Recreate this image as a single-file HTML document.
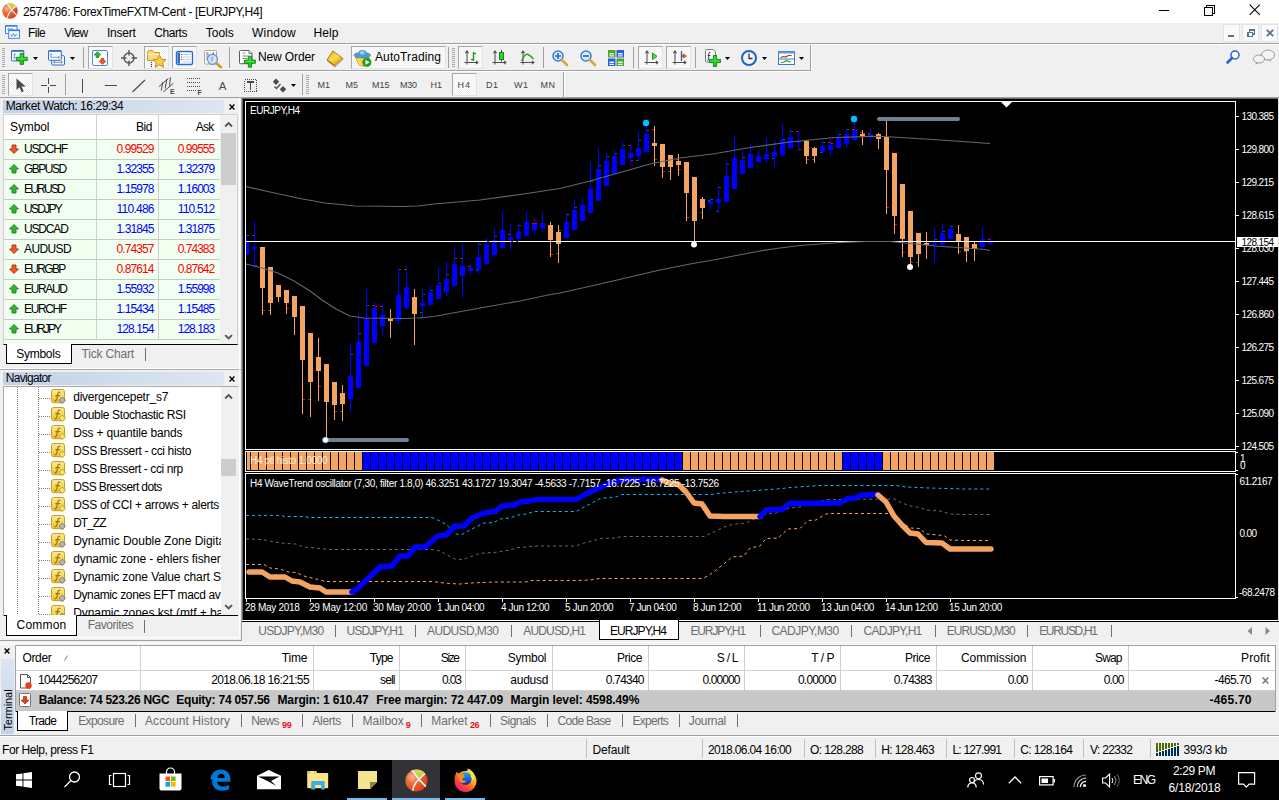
<!DOCTYPE html>
<html><head><meta charset="utf-8"><title>MT4</title>
<style>
*{box-sizing:border-box;margin:0;padding:0}
html,body{width:1279px;height:800px;overflow:hidden;background:#f0f0f0;font-family:"Liberation Sans",sans-serif;font-size:12px;color:#000}
.a{position:absolute}
.t{position:absolute;white-space:nowrap;line-height:14px}
.g{color:#6d6d6d}
.hdr{background:linear-gradient(90deg,#c3d1e5 0%,#dde6f2 100%)}
.red{color:#f00}.blu{color:#00f}
.btn{position:absolute;border:1px solid #e4e4e4;border-top-color:#a8a8a8;border-left-color:#a8a8a8;background:repeating-conic-gradient(#ffffff 0% 25%,#f0f0f0 0% 50%) 0 0/2px 2px}
.sep{position:absolute;width:1px;background:#a0a0a0}
svg{position:absolute;overflow:visible}
</style></head><body>
<!-- title -->
<div class="a" style="left:0px;top:0px;width:1279px;height:23px;background:#fff;"></div>
<svg style="left:2px;top:3px" width="16" height="16" viewBox="0 0 24 24" ><defs><radialGradient id="mt" cx="0.3" cy="0.35" r="0.8"><stop offset="0" stop-color="#ffb89a"/><stop offset="0.35" stop-color="#ee6a3c"/><stop offset="0.8" stop-color="#dc4a1c"/><stop offset="1" stop-color="#b0360e"/></radialGradient>
<linearGradient id="mtg" x1="0" y1="0" x2="0" y2="1"><stop offset="0" stop-color="#e4e070"/><stop offset="1" stop-color="#a8c832"/></linearGradient>
<clipPath id="mtc"><circle cx="12" cy="12" r="11.6"/></clipPath></defs>
<circle cx="12" cy="12" r="11.6" fill="url(#mt)"/>
<g clip-path="url(#mtc)"><path d="M6.500 0L14.500 10.500L22.500 3.500L20 -2H8z" fill="url(#mtg)"/>
<path d="M6.200 0L14.500 10.800L23 19.500M22.500 3L14.500 10.800Q8.200 16.500 8 24" fill="none" stroke="#f4f0ec" stroke-width="1.700"/></g></svg>
<div class="t " style="left:23.00px;top:5px;letter-spacing:-0.364px;">2574786: ForexTimeFXTM-Cent - [EURJPY,H4]</div>
<div class="a" style="left:1159px;top:10px;width:10px;height:1px;background:#000;"></div>
<svg style="left:1203px;top:4px" width="12" height="12" viewBox="0 0 12 12" shape-rendering="crispEdges"><path d="M1.5 3.5h8v8h-8z M3.5 3.500v-2h8v8h-2" fill="none" stroke="#000" stroke-width="1"/></svg>
<svg style="left:1249px;top:4px" width="12" height="12" viewBox="0 0 12 12"><path d="M0.700 0.700L10.800 10.800M10.800 0.700L0.700 10.800" fill="none" stroke="#000" stroke-width="1.100"/></svg>
<!-- menu -->
<svg style="left:4.8px;top:25.3px" width="16" height="14" viewBox="0 0 16 14" ><rect x="0.5" y="0.5" width="11.5" height="8" fill="#fff" stroke="#3c82e8"/><rect x="0.5" y="0.300" width="11.5" height="1.400" fill="#3c82e8"/>
<path d="M2.500 5l1.200-1.800 1.400 2.600 1.400-2.600 1.400 2" fill="none" stroke="#3c82e8" stroke-width="0.900"/>
<rect x="3.700" y="5" width="10.800" height="8.300" fill="#fff" stroke="#3c82e8"/><rect x="3.700" y="4.800" width="10.800" height="1.400" fill="#3c82e8"/>
<path d="M5.500 9.500l1.300 2 1.500-3 1.500 3 1.500-2.500 1.300 1.500" fill="none" stroke="#3c82e8" stroke-width="0.900"/></svg>
<div class="t " style="left:28.00px;top:26px;letter-spacing:-0.531px;">File</div>
<div class="t " style="left:64.25px;top:26px;letter-spacing:-0.599px;">View</div>
<div class="t " style="left:107.00px;top:26px;letter-spacing:-0.250px;">Insert</div>
<div class="t " style="left:154.25px;top:26px;letter-spacing:-0.419px;">Charts</div>
<div class="t " style="left:205.75px;top:26px;letter-spacing:-0.004px;">Tools</div>
<div class="t " style="left:252.00px;top:26px;letter-spacing:0.212px;">Window</div>
<div class="t " style="left:313.50px;top:26px;letter-spacing:0.104px;">Help</div>
<div class="a" style="left:1223px;top:24px;width:17px;height:18px;background:#fafafa;border:1px solid #e2e2e2"></div>
<div class="a" style="left:1242px;top:24px;width:17px;height:18px;background:#fafafa;border:1px solid #e2e2e2"></div>
<div class="a" style="left:1261px;top:24px;width:17px;height:18px;background:#fafafa;border:1px solid #e2e2e2"></div>
<div class="a" style="left:1228px;top:35px;width:6px;height:2px;background:#5b7590;"></div>
<svg style="left:1247px;top:29px" width="8" height="8" viewBox="0 0 8 8" shape-rendering="crispEdges"><path d="M2.500 2.500V0.750h5v4h-1.500" fill="none" stroke="#5b7590" stroke-width="1.500"/><rect x="0.750" y="3.500" width="4.500" height="3.750" fill="none" stroke="#5b7590" stroke-width="1.500"/></svg>
<svg style="left:1266px;top:29px" width="8" height="8" viewBox="0 0 8 8"><path d="M0.800 0.800L7.200 7.200M7.200 0.800L0.800 7.200" fill="none" stroke="#5b7590" stroke-width="1.900"/></svg>
<div class="a" style="left:0px;top:43px;width:1279px;height:1px;background:#a0a0a0;"></div>
<div class="a" style="left:0px;top:44px;width:1279px;height:1px;background:#fff;"></div>
<!-- toolbars -->
<div class="a" style="left:0px;top:70px;width:811px;height:1px;background:#a0a0a0;"></div>
<div class="a" style="left:0px;top:71px;width:812px;height:1px;background:#fff;"></div>
<div class="a" style="left:810px;top:45px;width:1px;height:26px;background:#a0a0a0;"></div>
<div class="a" style="left:811px;top:45px;width:1px;height:27px;background:#fff;"></div>
<div class="a" style="left:0px;top:97px;width:1279px;height:1px;background:#a0a0a0;"></div>
<div class="a" style="left:563px;top:72px;width:1px;height:25px;background:#a0a0a0;"></div>
<div class="a" style="left:564px;top:72px;width:1px;height:25px;background:#fff;"></div>
<div class="a" style="left:2px;top:48px;width:3px;height:20px;background:repeating-linear-gradient(180deg,#a8a8a8 0 1px,transparent 1px 2px)"></div>
<div class="a" style="left:2px;top:75px;width:3px;height:20px;background:repeating-linear-gradient(180deg,#a8a8a8 0 1px,transparent 1px 2px)"></div>
<div class="a" style="left:452px;top:48px;width:3px;height:20px;background:repeating-linear-gradient(180deg,#a8a8a8 0 1px,transparent 1px 2px)"></div>
<div class="a" style="left:306px;top:75px;width:3px;height:20px;background:repeating-linear-gradient(180deg,#a8a8a8 0 1px,transparent 1px 2px)"></div>
<div class="btn" style="left:88px;top:46px;width:25px;height:23px"></div>
<div class="btn" style="left:144px;top:46px;width:25px;height:23px"></div>
<div class="btn" style="left:172px;top:46px;width:25px;height:23px"></div>
<div class="btn" style="left:458px;top:46px;width:25px;height:23px"></div>
<div class="btn" style="left:638px;top:46px;width:25px;height:23px"></div>
<div class="btn" style="left:666px;top:46px;width:25px;height:23px"></div>
<div class="btn" style="left:351px;top:46px;width:95px;height:23px"></div>
<div class="btn" style="left:8px;top:73px;width:25px;height:23px"></div>
<div class="btn" style="left:452px;top:73px;width:25px;height:23px"></div>
<div class="sep" style="left:83px;top:47px;height:21px"></div>
<div class="sep" style="left:229px;top:47px;height:21px"></div>
<div class="sep" style="left:448px;top:47px;height:21px"></div>
<div class="sep" style="left:543px;top:47px;height:21px"></div>
<div class="sep" style="left:633px;top:47px;height:21px"></div>
<div class="sep" style="left:695px;top:47px;height:21px"></div>
<div class="sep" style="left:65px;top:74px;height:21px"></div>
<div class="sep" style="left:302px;top:74px;height:21px"></div>
<svg style="left:11px;top:50px" width="18" height="16" viewBox="0 0 18 16" ><rect x="0.500" y="0.500" width="12.300" height="10.400" rx="1" fill="#f6faff" stroke="#2e6fc0"/><rect x="0.500" y="0.300" width="12.300" height="1.500" fill="#2e6fc0"/><path d="M3.500 3.500v5M2.300 4.700l1.200-1.200 1.200 1.200M2.300 7.300l1.200 1.200 1.200-1.200" stroke="#7a94b8" fill="none" stroke-width="0.900"/><path d="M9.20 3.40h3.2v3.90h3.90v3.2h-3.90v3.90h-3.2v-3.90h-3.90v-3.2h3.90z" fill="#1ec81e" stroke="#0c8a0c" stroke-width="0.900"/><path d="M10.20 4.40h1.2000000000000002v3.90h3.90v1.2000000000000002h-9.00v-1.2000000000000002h3.90z" fill="#5cf05c" opacity="0.750"/></svg>
<svg style="left:33px;top:57px" width="5" height="3" viewBox="0 0 5 3" ><path d="M0 0h5L2.5 3z" fill="#000"/></svg>
<svg style="left:48px;top:50px" width="18" height="16" viewBox="0 0 18 16" ><rect x="3.700" y="5.700" width="12.800" height="9.300" rx="1" fill="#f6faff" stroke="#2e6fc0"/><path d="M5.500 12.300h9M7 11l-1.500 1.300 1.500 1.300M13 11l1.500 1.300-1.500 1.300" stroke="#5a8ac8" fill="none" stroke-width="0.900"/><rect x="0.500" y="0.500" width="12.800" height="9.800" rx="1" fill="#f6faff" stroke="#2e6fc0"/><rect x="0.500" y="0.300" width="12.800" height="1.500" fill="#2e6fc0"/><path d="M3 3.500v4.500M1.900 4.600L3 3.500l1.100 1.100M3 7.300h8.500M10 6l1.500 1.300-1.500 1.300" stroke="#7a94b8" fill="none" stroke-width="0.900"/></svg>
<svg style="left:70px;top:57px" width="5" height="3" viewBox="0 0 5 3" ><path d="M0 0h5L2.5 3z" fill="#000"/></svg>
<svg style="left:92px;top:50px" width="16" height="16" viewBox="0 0 16 16" ><rect x="0.5" y="0.5" width="15" height="15" rx="1.5" fill="#fff" stroke="#4a8ad8"/><path d="M5.5 1.5L9 5H7V7.5H4V5H2z" fill="#2fb62f" stroke="#1a7a1a" stroke-width="0.6"/><path d="M10.5 14.5L14 11H12V8.5H9V11H7z" fill="#f0582a" stroke="#b02c10" stroke-width="0.6"/></svg>
<svg style="left:121px;top:50px" width="16" height="16" viewBox="0 0 16 16" ><circle cx="8" cy="8" r="5" fill="none" stroke="#555" stroke-width="1.4"/><path d="M8 0v5.5M8 10.5V16M0 8h5.5M10.5 8H16" stroke="#555" stroke-width="1.4"/></svg>
<svg style="left:147px;top:49px" width="20" height="19" viewBox="0 0 20 19" ><path d="M0.5 3.5q0-2 2-2h3l2 2h5v8h-12z" fill="#f7dc7a" stroke="#c49a28"/><path d="M0.5 5.5h12" stroke="#fff3b8"/><path d="M4.5 13v5" stroke="#333" stroke-dasharray="1 1"/><path d="M12.5 6l2 4.2 4.5 0.5-3.3 3 1 4.6-4.2-2.4-4.2 2.4 1-4.6-3.3-3 4.5-0.5z" fill="#f6d040" stroke="#b8881c" stroke-width="0.9"/></svg>
<svg style="left:176px;top:51px" width="17" height="14" viewBox="0 0 17 14" ><rect x="0.5" y="0.5" width="16" height="13" rx="1.5" fill="#fff" stroke="#2a6bd0" stroke-width="1.4"/><rect x="1.5" y="1.5" width="2.5" height="11" fill="#2a6bd0"/><path d="M7 3.5h8M7 6h8M7 8.5h8M7 11h8" stroke="#a8c0e8" stroke-width="0.8"/><path d="M5 3.5h1.2M5 6h1.2M5 8.5h1.2" stroke="#e02020" stroke-width="1.2"/></svg>
<svg style="left:204px;top:50px" width="19" height="19" viewBox="0 0 19 19" ><rect x="0.500" y="0.500" width="12" height="13.500" rx="1" fill="#fdfcf8" stroke="#b4a684"/><path d="M3 2v8M9.500 2v6M3 3.500l2 1M9.500 3l-2 1.500" stroke="#6a7a98" stroke-width="0.900" fill="none"/><circle cx="8.500" cy="9.300" r="5" fill="#cfe2f6" fill-opacity="0.880" stroke="#5a92dc" stroke-width="1.200"/><rect x="6.800" y="6.500" width="2.400" height="5" fill="#9ab4d0" opacity="0.800"/><path d="M12.500 13.200l4.300 3.900" stroke="#c89a28" stroke-width="2.600" stroke-linecap="round"/></svg>
<svg style="left:240px;top:50px" width="18" height="19" viewBox="0 0 18 19" ><path d="M1.500 0.500h7.500l3 3v10.200h-11.500q-1 0-1-1v-11.200q0-1 1-1z" fill="#fff" stroke="#5a5a5a"/><path d="M9 0.500v3h3" fill="#e8e8e8" stroke="#5a5a5a" stroke-width="0.800"/><path d="M2.500 3h3M2.500 6h6M2.500 8.500h5" stroke="#888" stroke-width="1.100"/><path d="M8.30 6.20h3.2v3.90h3.90v3.2h-3.90v3.90h-3.2v-3.90h-3.90v-3.2h3.90z" fill="#1ec81e" stroke="#0c8a0c" stroke-width="0.900"/><path d="M9.30 7.20h1.2000000000000002v3.90h3.90v1.2000000000000002h-9.00v-1.2000000000000002h3.90z" fill="#5cf05c" opacity="0.750"/></svg>
<svg style="left:327px;top:50px" width="17" height="17" viewBox="0 0 17 17" ><defs><linearGradient id="bk" x1="0.2" y1="0.1" x2="0.8" y2="0.9"><stop offset="0" stop-color="#e8b428"/><stop offset="0.45" stop-color="#fbe04a"/><stop offset="1" stop-color="#d89818"/></linearGradient></defs><path d="M5.800 0.900L15.800 8.400L7.700 15.600L0.200 9.600z" fill="url(#bk)" stroke="#a8701a" stroke-width="0.900"/><path d="M15.800 8.400l-0.300 1.600-7.600 6.800-0.200-1.200z" fill="#f6e6a8" stroke="#a8701a" stroke-width="0.600"/><path d="M0.200 9.600l0.300 1.500 7.400 5.700-0.200-1.200z" fill="#c88a18" stroke="#a8701a" stroke-width="0.600"/></svg>
<svg style="left:354px;top:49.5px" width="18" height="18" viewBox="0 0 18 18" ><path d="M1.200 7h14l-4.300 8.800q-0.400 0.800-1.300 0.600l-3.400-0.800q-0.800-0.200-1.200-1z" fill="#f6d648" stroke="#c8981c" stroke-width="0.800"/><path d="M3 8.500l3 6.500 1.500 0.300z" fill="#fff2a8" opacity="0.700"/><ellipse cx="8.300" cy="5.200" rx="8.200" ry="2.700" fill="#4e9fd6" stroke="#2e78b8" stroke-width="0.700"/><ellipse cx="8.500" cy="3.200" rx="3.800" ry="2.800" fill="#6cb6e8" stroke="#2e78b8" stroke-width="0.700"/><ellipse cx="8" cy="2.500" rx="2" ry="1.200" fill="#a8d8f8" opacity="0.800"/><circle cx="12.900" cy="12.300" r="4.100" fill="#18a418" stroke="#0c7c0c" stroke-width="0.600"/><path d="M11.500 9.800v5l4.200-2.500z" fill="#fff"/></svg>
<svg style="left:464px;top:50px" width="15" height="16" viewBox="0 0 15 16" ><path d="M3 1v13.500M0.500 12.500H14M1.400 3.200L3 1l1.600 2.200M12 10.900l2 1.600-2 1.600" fill="none" stroke="#505050" stroke-width="1.050"/><path d="M9.5 2v9M7 9.5h2.5M9.5 3.5H12" stroke="#22a022" stroke-width="1.5" fill="none"/></svg>
<svg style="left:492px;top:50px" width="15" height="16" viewBox="0 0 15 16" ><path d="M3 1v13.500M0.500 12.500H14M1.400 3.200L3 1l1.600 2.200M12 10.900l2 1.600-2 1.600" fill="none" stroke="#505050" stroke-width="1.050"/><path d="M9.5 0v11.5" stroke="#333" stroke-width="1"/><rect x="7.5" y="2.5" width="4" height="7" fill="#38d038" stroke="#128a12"/></svg>
<svg style="left:520px;top:50px" width="15" height="16" viewBox="0 0 15 16" ><path d="M3 1v13.500M0.500 12.500H14M1.400 3.200L3 1l1.600 2.200M12 10.900l2 1.600-2 1.600" fill="none" stroke="#505050" stroke-width="1.050"/><path d="M1.5 11Q5 3 8 4.5T13.5 9" fill="none" stroke="#22a022" stroke-width="1.4"/></svg>
<svg style="left:552px;top:50px" width="17" height="17" viewBox="0 0 17 17" ><circle cx="6" cy="6" r="5" fill="#d8ecfc" stroke="#3a84d8" stroke-width="1.6"/><path d="M10 10l5 5" stroke="#d8a838" stroke-width="2.6" stroke-linecap="round"/><path d="M3 6h6M6 3v6" stroke="#2a6bd0" stroke-width="1.7"/></svg>
<svg style="left:580px;top:50px" width="17" height="17" viewBox="0 0 17 17" ><circle cx="6" cy="6" r="5" fill="#d8ecfc" stroke="#3a84d8" stroke-width="1.6"/><path d="M10 10l5 5" stroke="#d8a838" stroke-width="2.6" stroke-linecap="round"/><path d="M3 6h6" stroke="#2a6bd0" stroke-width="1.7"/></svg>
<svg style="left:608px;top:50px" width="16" height="16" viewBox="0 0 16 16" ><rect x="0" y="0" width="7.5" height="7.5" fill="#4aa828"/><rect x="1.5" y="3" width="4.5" height="3.5" fill="#f0f4fa"/><rect x="1.5" y="4.5" width="4.5" height="0.8" fill="#4aa828"/><rect x="8.5" y="0" width="7.5" height="7.5" fill="#2a5ed8"/><rect x="10.0" y="3" width="4.5" height="3.5" fill="#f0f4fa"/><rect x="10.0" y="4.5" width="4.5" height="0.8" fill="#2a5ed8"/><rect x="0" y="8.5" width="7.5" height="7.5" fill="#2a5ed8"/><rect x="1.5" y="11.5" width="4.5" height="3.5" fill="#f0f4fa"/><rect x="1.5" y="13.0" width="4.5" height="0.8" fill="#2a5ed8"/><rect x="8.5" y="8.5" width="7.5" height="7.5" fill="#4aa828"/><rect x="10.0" y="11.5" width="4.5" height="3.5" fill="#f0f4fa"/><rect x="10.0" y="13.0" width="4.5" height="0.8" fill="#4aa828"/></svg>
<svg style="left:644px;top:50px" width="15" height="16" viewBox="0 0 15 16" ><path d="M3 1v13.500M0.500 12.500H14M1.400 3.200L3 1l1.600 2.200M12 10.900l2 1.600-2 1.600" fill="none" stroke="#505050" stroke-width="1.050"/><path d="M8.5 3v6.5l4.5-3.2z" fill="#58d858" stroke="#128a12" stroke-width="0.9"/></svg>
<svg style="left:672px;top:50px" width="15" height="16" viewBox="0 0 15 16" ><path d="M3 1v13.500M0.500 12.500H14M1.400 3.200L3 1l1.600 2.200M12 10.900l2 1.600-2 1.600" fill="none" stroke="#505050" stroke-width="1.050"/><path d="M9.5 1v10" stroke="#2a6bb0" stroke-width="1.4"/><path d="M14.5 6h-4M12.5 4l-2 2 2 2" stroke="#d83a10" stroke-width="1.3" fill="none"/></svg>
<svg style="left:705px;top:49px" width="18" height="19" viewBox="0 0 18 19" ><path d="M0.500 1.500q0-1 1-1h6.500l2.500 2.500v10h-9q-1 0-1-1z" fill="#fff" stroke="#777"/><path d="M5.500 3.500q-1.800-0.300-1.800 1.500v5q0 1.500-1.500 1.200M2.500 6.500h3" fill="none" stroke="#444" stroke-width="1"/><path d="M8.40 6.50h3.2v3.90h3.90v3.2h-3.90v3.90h-3.2v-3.90h-3.90v-3.2h3.90z" fill="#1ec81e" stroke="#0c8a0c" stroke-width="0.900"/><path d="M9.40 7.50h1.2000000000000002v3.90h3.90v1.2000000000000002h-9.00v-1.2000000000000002h3.90z" fill="#5cf05c" opacity="0.750"/></svg>
<svg style="left:725px;top:57px" width="5" height="3" viewBox="0 0 5 3" ><path d="M0 0h5L2.5 3z" fill="#000"/></svg>
<svg style="left:741px;top:50px" width="17" height="17" viewBox="0 0 17 17" ><circle cx="8" cy="8" r="7" fill="#f4f8fc" stroke="#1a62c8" stroke-width="2"/><path d="M8 3.5v5h3.500" fill="none" stroke="#333" stroke-width="1.300"/></svg>
<svg style="left:762px;top:57px" width="5" height="3" viewBox="0 0 5 3" ><path d="M0 0h5L2.5 3z" fill="#000"/></svg>
<svg style="left:778px;top:51px" width="17" height="14" viewBox="0 0 17 14" ><rect x="0.500" y="0.500" width="16" height="13" fill="#fff" stroke="#3a7bd0"/><rect x="0.500" y="0.500" width="16" height="2" fill="#5b9be0"/><path d="M0.500 8h16" stroke="#3a7bd0"/><path d="M2.500 6.500l3-1 2 0.500 3-1.500 3 0" stroke="#c02a10" stroke-width="1.200" fill="none"/><path d="M3 11.500l3-0.500 2.500-1.500 2 1 2.500 0.500" stroke="#22a022" stroke-width="1.200" fill="none"/></svg>
<svg style="left:799px;top:57px" width="5" height="3" viewBox="0 0 5 3" ><path d="M0 0h5L2.5 3z" fill="#000"/></svg>
<svg style="left:1226px;top:50px" width="14" height="15" viewBox="0 0 14 15" ><circle cx="9" cy="5" r="4" fill="#fff" stroke="#2a5ed8" stroke-width="1.500"/><path d="M6 8l-4.500 4.500" stroke="#2a5ed8" stroke-width="2.600" stroke-linecap="round"/></svg>
<svg style="left:1253px;top:49px" width="22" height="17" viewBox="0 0 22 17" ><ellipse cx="15" cy="6" rx="6.500" ry="5" fill="#f4f4f4" stroke="#9a9a9a"/><path d="M17 10.500l1.500 2.500-3-2z" fill="#9a9a9a"/><ellipse cx="6" cy="10" rx="5.500" ry="4" fill="#f4f4f4" stroke="#9a9a9a"/><path d="M3 13.500l-0.500 2.500 2.500-2z" fill="#9a9a9a"/></svg>
<svg style="left:16px;top:78px" width="10" height="15" viewBox="0 0 10 15" ><path d="M0.500 0.500v11.500l3-2.800 2.200 5 2-0.900-2.200-4.800h4.200z" fill="#4a4a4a"/></svg>
<svg style="left:41px;top:78px" width="15" height="15" viewBox="0 0 15 15" shape-rendering="crispEdges"><path d="M7.500 0v6M7.500 9v6M0 7.500h6M9 7.500h6" stroke="#4a4a4a" stroke-width="1.100"/></svg>
<svg style="left:81px;top:79px" width="3" height="14" viewBox="0 0 3 14" shape-rendering="crispEdges"><path d="M1.500 0v14" stroke="#4a4a4a" stroke-width="1.200"/></svg>
<svg style="left:105px;top:84px" width="13" height="3" viewBox="0 0 13 3" shape-rendering="crispEdges"><path d="M0 1.500h12" stroke="#4a4a4a" stroke-width="1.200"/></svg>
<svg style="left:132px;top:79px" width="14" height="14" viewBox="0 0 14 14" ><path d="M0.500 13L13 1" stroke="#4a4a4a" stroke-width="1.200"/></svg>
<svg style="left:159px;top:77px" width="17" height="17" viewBox="0 0 17 17" ><path d="M-0.200 9.700L9.500 1.300M4.400 15L14.400 6.200M3.900 5L2.200 13.600M7.800 2.200L6.200 11.500M11.500 0.300L10.500 8.700" stroke="#4a4a4a" stroke-width="1" fill="none"/><text x="11" y="16.500" font-size="7" font-weight="bold" font-family="Liberation Sans" fill="#4a4a4a">E</text></svg>
<svg style="left:187px;top:78px" width="17" height="17" viewBox="0 0 17 17" shape-rendering="crispEdges"><path d="M0 0.500h13M0 4.500h13M0 8.500h13M0 12.500h9" stroke="#4a4a4a" stroke-width="1" stroke-dasharray="1 1"/><text x="10.500" y="16.500" font-size="7" font-weight="bold" font-family="Liberation Sans" fill="#4a4a4a">F</text></svg>
<div class="t" style="left:218.800px;top:79px;font-size:11.500px;color:#4a4a4a;letter-spacing:0">A</div>
<svg style="left:244px;top:78px" width="14" height="15" viewBox="0 0 14 15" shape-rendering="crispEdges"><rect x="0.500" y="1.500" width="12" height="12" fill="none" stroke="#4a4a4a" stroke-dasharray="1 1"/><path d="M3 4h7M6.500 4v8" stroke="#4a4a4a" stroke-width="1.600"/></svg>
<svg style="left:272px;top:78px" width="15" height="15" viewBox="0 0 15 15" ><path d="M4 0.500l3.200 3.200-3.200 3.200-3.200-3.200z M11 8l3.200 3.200-3.200 3.200-3.200-3.200z" fill="#4a4a4a"/><path d="M2.500 8.500l2 2 4-4.500" stroke="#4a4a4a" stroke-width="1.300" fill="none"/></svg>
<svg style="left:291px;top:84px" width="5" height="3" viewBox="0 0 5 3" ><path d="M0 0h5L2.5 3z" fill="#000"/></svg>
<div class="t " style="left:258.00px;top:50px;letter-spacing:-0.127px;">New Order</div>
<div class="t " style="left:375.00px;top:50px;letter-spacing:0.108px;">AutoTrading</div>
<div class="t " style="left:317.50px;top:78px;letter-spacing:0.000px;font-size:9px;color:#444">M1</div>
<div class="t " style="left:345.60px;top:78px;letter-spacing:-0.100px;font-size:9px;color:#444">M5</div>
<div class="t " style="left:372.00px;top:78px;letter-spacing:0.000px;font-size:9px;color:#444">M15</div>
<div class="t " style="left:400.00px;top:78px;letter-spacing:-0.250px;font-size:9px;color:#444">M30</div>
<div class="t " style="left:430.60px;top:78px;letter-spacing:-0.100px;font-size:9px;color:#444">H1</div>
<div class="t " style="left:457.50px;top:78px;letter-spacing:1.000px;font-size:9px;color:#444">H4</div>
<div class="t " style="left:486.00px;top:78px;letter-spacing:0.500px;font-size:9px;color:#444">D1</div>
<div class="t " style="left:514.00px;top:78px;letter-spacing:0.500px;font-size:9px;color:#444">W1</div>
<div class="t " style="left:540.60px;top:78px;letter-spacing:0.400px;font-size:9px;color:#444">MN</div>
<!-- market_watch -->
<div class="a hdr" style="left:3px;top:100px;width:221px;height:13px"></div>
<div class="t " style="left:5.70px;top:99px;letter-spacing:-0.424px;">Market Watch: 16:29:34</div>
<svg style="left:229px;top:104px" width="6" height="6" viewBox="0 0 6 6" ><path d="M0.600 0.600L5.4 5.4M5.4 0.600L0.600 5.4" stroke="#000" stroke-width="1.450"/></svg>
<div class="a" style="left:3px;top:114px;width:235px;height:231px;background:#fff;border:1px solid #d0d0d0;border-bottom:1px solid #000"></div>
<div class="t " style="left:10.00px;top:120px;letter-spacing:-0.103px;">Symbol</div>
<div class="t " style="left:136.00px;top:120px;letter-spacing:-0.422px;">Bid</div>
<div class="t " style="left:195.70px;top:120px;letter-spacing:-0.750px;">Ask</div>
<div class="a" style="left:96px;top:115px;width:1px;height:229px;background:#d0d0d0;"></div>
<div class="a" style="left:158px;top:115px;width:1px;height:229px;background:#d0d0d0;"></div>
<div class="a" style="left:4px;top:139px;width:216px;height:1px;background:#c8c8c8;"></div>
<div class="a" style="left:4px;top:140px;width:92px;height:19px;background:#f0fff0;"></div>
<div class="a" style="left:97px;top:140px;width:61px;height:19px;background:#f0fff0;"></div>
<div class="a" style="left:159px;top:140px;width:61px;height:19px;background:#f0fff0;"></div>
<div class="a" style="left:4px;top:159px;width:216px;height:1px;background:#c8c8c8;"></div>
<svg style="left:9px;top:144px" width="10" height="10" viewBox="0 0 10 10" ><path d="M5 9.5L9.5 5H7V1H3V5H0.5z" fill="#f0582a" stroke="#b02c10" stroke-width="0.9"/></svg>
<div class="t " style="left:24.00px;top:142px;letter-spacing:-1.163px;">USDCHF</div>
<div class="t red" style="left:116.50px;top:142px;letter-spacing:-0.893px;">0.99529</div>
<div class="t red" style="left:177.70px;top:142px;letter-spacing:-0.977px;">0.99555</div>
<div class="a" style="left:4px;top:160px;width:92px;height:19px;background:#f0fff0;"></div>
<div class="a" style="left:97px;top:160px;width:61px;height:19px;background:#f0fff0;"></div>
<div class="a" style="left:159px;top:160px;width:61px;height:19px;background:#f0fff0;"></div>
<div class="a" style="left:4px;top:179px;width:216px;height:1px;background:#c8c8c8;"></div>
<svg style="left:9px;top:164px" width="10" height="10" viewBox="0 0 10 10" ><path d="M5 0.5L9.5 5H7V9H3V5H0.5z" fill="#35b535" stroke="#1c7a1c" stroke-width="0.9"/></svg>
<div class="t " style="left:24.00px;top:162px;letter-spacing:-1.494px;">GBPUSD</div>
<div class="t blu" style="left:116.50px;top:162px;letter-spacing:-0.893px;">1.32355</div>
<div class="t blu" style="left:177.70px;top:162px;letter-spacing:-0.977px;">1.32379</div>
<div class="a" style="left:4px;top:180px;width:92px;height:19px;background:#f0fff0;"></div>
<div class="a" style="left:97px;top:180px;width:61px;height:19px;background:#f0fff0;"></div>
<div class="a" style="left:159px;top:180px;width:61px;height:19px;background:#f0fff0;"></div>
<div class="a" style="left:4px;top:199px;width:216px;height:1px;background:#c8c8c8;"></div>
<svg style="left:9px;top:184px" width="10" height="10" viewBox="0 0 10 10" ><path d="M5 0.5L9.5 5H7V9H3V5H0.5z" fill="#35b535" stroke="#1c7a1c" stroke-width="0.9"/></svg>
<div class="t " style="left:24.00px;top:182px;letter-spacing:-1.778px;">EURUSD</div>
<div class="t blu" style="left:116.50px;top:182px;letter-spacing:-0.893px;">1.15978</div>
<div class="t blu" style="left:177.70px;top:182px;letter-spacing:-0.977px;">1.16003</div>
<div class="a" style="left:4px;top:200px;width:92px;height:19px;background:#f0fff0;"></div>
<div class="a" style="left:97px;top:200px;width:61px;height:19px;background:#f0fff0;"></div>
<div class="a" style="left:159px;top:200px;width:61px;height:19px;background:#f0fff0;"></div>
<div class="a" style="left:4px;top:219px;width:216px;height:1px;background:#c8c8c8;"></div>
<svg style="left:9px;top:204px" width="10" height="10" viewBox="0 0 10 10" ><path d="M5 0.5L9.5 5H7V9H3V5H0.5z" fill="#35b535" stroke="#1c7a1c" stroke-width="0.9"/></svg>
<div class="t " style="left:24.00px;top:202px;letter-spacing:-1.709px;">USDJPY</div>
<div class="t blu" style="left:116.50px;top:202px;letter-spacing:-0.745px;">110.486</div>
<div class="t blu" style="left:177.70px;top:202px;letter-spacing:-0.828px;">110.512</div>
<div class="a" style="left:4px;top:220px;width:92px;height:19px;background:#f0fff0;"></div>
<div class="a" style="left:97px;top:220px;width:61px;height:19px;background:#f0fff0;"></div>
<div class="a" style="left:159px;top:220px;width:61px;height:19px;background:#f0fff0;"></div>
<div class="a" style="left:4px;top:239px;width:216px;height:1px;background:#c8c8c8;"></div>
<svg style="left:9px;top:224px" width="10" height="10" viewBox="0 0 10 10" ><path d="M5 0.5L9.5 5H7V9H3V5H0.5z" fill="#35b535" stroke="#1c7a1c" stroke-width="0.9"/></svg>
<div class="t " style="left:24.00px;top:222px;letter-spacing:-1.158px;">USDCAD</div>
<div class="t blu" style="left:116.50px;top:222px;letter-spacing:-0.893px;">1.31845</div>
<div class="t blu" style="left:177.70px;top:222px;letter-spacing:-0.977px;">1.31875</div>
<div class="a" style="left:4px;top:240px;width:92px;height:19px;background:#f0fff0;"></div>
<div class="a" style="left:97px;top:240px;width:61px;height:19px;background:#f0fff0;"></div>
<div class="a" style="left:159px;top:240px;width:61px;height:19px;background:#f0fff0;"></div>
<div class="a" style="left:4px;top:259px;width:216px;height:1px;background:#c8c8c8;"></div>
<svg style="left:9px;top:244px" width="10" height="10" viewBox="0 0 10 10" ><path d="M5 9.5L9.5 5H7V1H3V5H0.5z" fill="#f0582a" stroke="#b02c10" stroke-width="0.9"/></svg>
<div class="t " style="left:24.00px;top:242px;letter-spacing:-0.617px;">AUDUSD</div>
<div class="t red" style="left:116.50px;top:242px;letter-spacing:-0.893px;">0.74357</div>
<div class="t red" style="left:177.70px;top:242px;letter-spacing:-0.977px;">0.74383</div>
<div class="a" style="left:4px;top:260px;width:92px;height:19px;background:#f0fff0;"></div>
<div class="a" style="left:97px;top:260px;width:61px;height:19px;background:#f0fff0;"></div>
<div class="a" style="left:159px;top:260px;width:61px;height:19px;background:#f0fff0;"></div>
<div class="a" style="left:4px;top:279px;width:216px;height:1px;background:#c8c8c8;"></div>
<svg style="left:9px;top:264px" width="10" height="10" viewBox="0 0 10 10" ><path d="M5 9.5L9.5 5H7V1H3V5H0.5z" fill="#f0582a" stroke="#b02c10" stroke-width="0.9"/></svg>
<div class="t " style="left:24.00px;top:262px;letter-spacing:-1.694px;">EURGBP</div>
<div class="t red" style="left:116.50px;top:262px;letter-spacing:-0.893px;">0.87614</div>
<div class="t red" style="left:177.70px;top:262px;letter-spacing:-0.977px;">0.87642</div>
<div class="a" style="left:4px;top:280px;width:92px;height:19px;background:#f0fff0;"></div>
<div class="a" style="left:97px;top:280px;width:61px;height:19px;background:#f0fff0;"></div>
<div class="a" style="left:159px;top:280px;width:61px;height:19px;background:#f0fff0;"></div>
<div class="a" style="left:4px;top:299px;width:216px;height:1px;background:#c8c8c8;"></div>
<svg style="left:9px;top:284px" width="10" height="10" viewBox="0 0 10 10" ><path d="M5 0.5L9.5 5H7V9H3V5H0.5z" fill="#35b535" stroke="#1c7a1c" stroke-width="0.9"/></svg>
<div class="t " style="left:24.00px;top:282px;letter-spacing:-1.358px;">EURAUD</div>
<div class="t blu" style="left:116.50px;top:282px;letter-spacing:-0.893px;">1.55932</div>
<div class="t blu" style="left:177.70px;top:282px;letter-spacing:-0.977px;">1.55998</div>
<div class="a" style="left:4px;top:300px;width:92px;height:19px;background:#f0fff0;"></div>
<div class="a" style="left:97px;top:300px;width:61px;height:19px;background:#f0fff0;"></div>
<div class="a" style="left:159px;top:300px;width:61px;height:19px;background:#f0fff0;"></div>
<div class="a" style="left:4px;top:319px;width:216px;height:1px;background:#c8c8c8;"></div>
<svg style="left:9px;top:304px" width="10" height="10" viewBox="0 0 10 10" ><path d="M5 0.5L9.5 5H7V9H3V5H0.5z" fill="#35b535" stroke="#1c7a1c" stroke-width="0.9"/></svg>
<div class="t " style="left:24.00px;top:302px;letter-spacing:-1.363px;">EURCHF</div>
<div class="t blu" style="left:116.50px;top:302px;letter-spacing:-0.893px;">1.15434</div>
<div class="t blu" style="left:177.70px;top:302px;letter-spacing:-0.977px;">1.15485</div>
<div class="a" style="left:4px;top:320px;width:92px;height:19px;background:#f0fff0;"></div>
<div class="a" style="left:97px;top:320px;width:61px;height:19px;background:#f0fff0;"></div>
<div class="a" style="left:159px;top:320px;width:61px;height:19px;background:#f0fff0;"></div>
<div class="a" style="left:4px;top:339px;width:216px;height:1px;background:#c8c8c8;"></div>
<svg style="left:9px;top:324px" width="10" height="10" viewBox="0 0 10 10" ><path d="M5 0.5L9.5 5H7V9H3V5H0.5z" fill="#35b535" stroke="#1c7a1c" stroke-width="0.9"/></svg>
<div class="t " style="left:24.00px;top:322px;letter-spacing:-1.849px;">EURJPY</div>
<div class="t blu" style="left:116.50px;top:322px;letter-spacing:-0.893px;">128.154</div>
<div class="t blu" style="left:177.70px;top:322px;letter-spacing:-0.977px;">128.183</div>
<div class="a" style="left:4px;top:340px;width:216px;height:4px;background:#f0fff0;"></div>
<div class="a" style="left:220px;top:115px;width:17px;height:229px;background:#f0f0f0;"></div>
<div class="a" style="left:221px;top:133px;width:15px;height:52px;background:#cdcdcd;"></div>
<svg style="left:224px;top:120.5px" width="9.2" height="7.6" viewBox="0 0 9.2 7.6" ><path d="M1.2 5.500L4.600 2.100L8 5.500" fill="none" stroke="#555" stroke-width="1.900"/></svg>
<svg style="left:224px;top:332.5px" width="9.2" height="7.6" viewBox="0 0 9.2 7.6" ><path d="M1.2 2.100L4.600 5.500L8 2.100" fill="none" stroke="#555" stroke-width="1.900"/></svg>
<div class="a" style="left:6px;top:344px;width:66px;height:20px;background:#fff;border:1px solid #000;border-top:none"></div>
<div class="a" style="left:7px;top:344px;width:64px;height:1px;background:#fff;"></div>
<div class="t " style="left:16.20px;top:347px;letter-spacing:-0.253px;">Symbols</div>
<div class="t g" style="left:81.60px;top:347px;letter-spacing:-0.182px;">Tick Chart</div>
<div class="a" style="left:145px;top:348px;width:1px;height:13px;background:#707070;"></div>
<!-- navigator -->
<div class="a" style="left:0px;top:368px;width:241px;height:1px;background:#fff;"></div>
<div class="a" style="left:0px;top:369px;width:241px;height:1px;background:#a9a9a9;"></div>
<div class="a hdr" style="left:3px;top:372px;width:221px;height:13px"></div>
<div class="t " style="left:5.80px;top:371px;letter-spacing:-0.707px;">Navigator</div>
<svg style="left:229px;top:376px" width="6" height="6" viewBox="0 0 6 6" ><path d="M0.600 0.600L5.4 5.4M5.4 0.600L0.600 5.4" stroke="#000" stroke-width="1.450"/></svg>
<div class="a" style="left:3px;top:386px;width:235px;height:1px;background:#a9a9a9;"></div>
<div class="a" style="left:3px;top:387px;width:235px;height:229px;background:#fff;border-bottom:1px solid #000;overflow:hidden">
<div class="a" style="left:14px;top:0;width:1px;height:228px;background:repeating-linear-gradient(180deg,#808080 0 1px,transparent 1px 2px)"></div>
<div class="a" style="left:35px;top:0;width:1px;height:228px;background:repeating-linear-gradient(180deg,#808080 0 1px,transparent 1px 2px)"></div>
<div class="a" style="left:36px;top:11px;width:11px;height:1px;background:repeating-linear-gradient(90deg,#808080 0 1px,transparent 1px 2px)"></div>
<svg style="left:48.25px;top:2px" width="15" height="15" viewBox="0 0 15 15" ><defs><linearGradient id="fg0" x1="0" y1="0" x2="0" y2="1"><stop offset="0" stop-color="#fcec9c"/><stop offset="0.5" stop-color="#f6d858"/><stop offset="1" stop-color="#eec02c"/></linearGradient></defs>
<rect x="0.5" y="0.5" width="13" height="13.2" rx="2.2" fill="url(#fg0)" stroke="#c49e24"/>
<path d="M9 3.200Q7.200 2.600 6.800 5L5.800 10.200Q5.400 12 3.800 11.400M4.800 6.600H8.600" fill="none" stroke="#9a7414" stroke-width="1.200" stroke-linecap="round"/>
<path d="M11.250 8l3.300 3.300-3.300 3.300-3.300-3.300z" fill="#b4b4b4" stroke="#6e6e6e" stroke-width="0.800"/></svg>
<div class="t " style="left:70.20px;top:3px;letter-spacing:-0.220px;">divergencepetr_s7</div>
<div class="a" style="left:36px;top:29px;width:11px;height:1px;background:repeating-linear-gradient(90deg,#808080 0 1px,transparent 1px 2px)"></div>
<svg style="left:48.25px;top:20px" width="15" height="15" viewBox="0 0 15 15" ><defs><linearGradient id="fg1" x1="0" y1="0" x2="0" y2="1"><stop offset="0" stop-color="#fcec9c"/><stop offset="0.5" stop-color="#f6d858"/><stop offset="1" stop-color="#eec02c"/></linearGradient></defs>
<rect x="0.5" y="0.5" width="13" height="13.2" rx="2.2" fill="url(#fg1)" stroke="#c49e24"/>
<path d="M9 3.200Q7.200 2.600 6.800 5L5.800 10.200Q5.400 12 3.800 11.400M4.800 6.600H8.600" fill="none" stroke="#9a7414" stroke-width="1.200" stroke-linecap="round"/>
<path d="M11.250 8l3.300 3.300-3.300 3.300-3.300-3.300z" fill="#f8e268" stroke="#b8921c" stroke-width="0.800"/></svg>
<div class="t " style="left:70.20px;top:21px;letter-spacing:-0.362px;">Double Stochastic RSI</div>
<div class="a" style="left:36px;top:47px;width:11px;height:1px;background:repeating-linear-gradient(90deg,#808080 0 1px,transparent 1px 2px)"></div>
<svg style="left:48.25px;top:38px" width="15" height="15" viewBox="0 0 15 15" ><defs><linearGradient id="fg2" x1="0" y1="0" x2="0" y2="1"><stop offset="0" stop-color="#fcec9c"/><stop offset="0.5" stop-color="#f6d858"/><stop offset="1" stop-color="#eec02c"/></linearGradient></defs>
<rect x="0.5" y="0.5" width="13" height="13.2" rx="2.2" fill="url(#fg2)" stroke="#c49e24"/>
<path d="M9 3.200Q7.200 2.600 6.800 5L5.800 10.200Q5.400 12 3.800 11.400M4.800 6.600H8.600" fill="none" stroke="#9a7414" stroke-width="1.200" stroke-linecap="round"/>
<path d="M11.250 8l3.300 3.300-3.300 3.300-3.300-3.300z" fill="#f8e268" stroke="#b8921c" stroke-width="0.800"/></svg>
<div class="t " style="left:70.20px;top:39px;letter-spacing:-0.163px;">Dss + quantile bands</div>
<div class="a" style="left:36px;top:65px;width:11px;height:1px;background:repeating-linear-gradient(90deg,#808080 0 1px,transparent 1px 2px)"></div>
<svg style="left:48.25px;top:56px" width="15" height="15" viewBox="0 0 15 15" ><defs><linearGradient id="fg3" x1="0" y1="0" x2="0" y2="1"><stop offset="0" stop-color="#fcec9c"/><stop offset="0.5" stop-color="#f6d858"/><stop offset="1" stop-color="#eec02c"/></linearGradient></defs>
<rect x="0.5" y="0.5" width="13" height="13.2" rx="2.2" fill="url(#fg3)" stroke="#c49e24"/>
<path d="M9 3.200Q7.200 2.600 6.800 5L5.800 10.200Q5.400 12 3.800 11.400M4.800 6.600H8.600" fill="none" stroke="#9a7414" stroke-width="1.200" stroke-linecap="round"/>
<path d="M11.250 8l3.300 3.300-3.300 3.300-3.300-3.300z" fill="#f8e268" stroke="#b8921c" stroke-width="0.800"/></svg>
<div class="t " style="left:70.20px;top:57px;letter-spacing:-0.364px;">DSS Bressert - cci histo</div>
<div class="a" style="left:36px;top:83px;width:11px;height:1px;background:repeating-linear-gradient(90deg,#808080 0 1px,transparent 1px 2px)"></div>
<svg style="left:48.25px;top:74px" width="15" height="15" viewBox="0 0 15 15" ><defs><linearGradient id="fg4" x1="0" y1="0" x2="0" y2="1"><stop offset="0" stop-color="#fcec9c"/><stop offset="0.5" stop-color="#f6d858"/><stop offset="1" stop-color="#eec02c"/></linearGradient></defs>
<rect x="0.5" y="0.5" width="13" height="13.2" rx="2.2" fill="url(#fg4)" stroke="#c49e24"/>
<path d="M9 3.200Q7.200 2.600 6.800 5L5.800 10.200Q5.400 12 3.800 11.400M4.800 6.600H8.600" fill="none" stroke="#9a7414" stroke-width="1.200" stroke-linecap="round"/>
<path d="M11.250 8l3.300 3.300-3.300 3.300-3.300-3.300z" fill="#f8e268" stroke="#b8921c" stroke-width="0.800"/></svg>
<div class="t " style="left:70.20px;top:75px;letter-spacing:-0.413px;">DSS Bressert - cci nrp</div>
<div class="a" style="left:36px;top:101px;width:11px;height:1px;background:repeating-linear-gradient(90deg,#808080 0 1px,transparent 1px 2px)"></div>
<svg style="left:48.25px;top:92px" width="15" height="15" viewBox="0 0 15 15" ><defs><linearGradient id="fg5" x1="0" y1="0" x2="0" y2="1"><stop offset="0" stop-color="#fcec9c"/><stop offset="0.5" stop-color="#f6d858"/><stop offset="1" stop-color="#eec02c"/></linearGradient></defs>
<rect x="0.5" y="0.5" width="13" height="13.2" rx="2.2" fill="url(#fg5)" stroke="#c49e24"/>
<path d="M9 3.200Q7.200 2.600 6.800 5L5.800 10.200Q5.400 12 3.800 11.400M4.800 6.600H8.600" fill="none" stroke="#9a7414" stroke-width="1.200" stroke-linecap="round"/>
<path d="M11.250 8l3.300 3.300-3.300 3.300-3.300-3.300z" fill="#f8e268" stroke="#b8921c" stroke-width="0.800"/></svg>
<div class="t " style="left:70.20px;top:93px;letter-spacing:-0.604px;">DSS Bressert dots</div>
<div class="a" style="left:36px;top:119px;width:11px;height:1px;background:repeating-linear-gradient(90deg,#808080 0 1px,transparent 1px 2px)"></div>
<svg style="left:48.25px;top:110px" width="15" height="15" viewBox="0 0 15 15" ><defs><linearGradient id="fg6" x1="0" y1="0" x2="0" y2="1"><stop offset="0" stop-color="#fcec9c"/><stop offset="0.5" stop-color="#f6d858"/><stop offset="1" stop-color="#eec02c"/></linearGradient></defs>
<rect x="0.5" y="0.5" width="13" height="13.2" rx="2.2" fill="url(#fg6)" stroke="#c49e24"/>
<path d="M9 3.200Q7.200 2.600 6.800 5L5.800 10.200Q5.400 12 3.800 11.400M4.800 6.600H8.600" fill="none" stroke="#9a7414" stroke-width="1.200" stroke-linecap="round"/>
<path d="M11.250 8l3.300 3.300-3.300 3.300-3.300-3.300z" fill="#f8e268" stroke="#b8921c" stroke-width="0.800"/></svg>
<div class="t " style="left:70.20px;top:111px;letter-spacing:-0.322px;">DSS of CCI + arrows + alerts</div>
<div class="a" style="left:36px;top:137px;width:11px;height:1px;background:repeating-linear-gradient(90deg,#808080 0 1px,transparent 1px 2px)"></div>
<svg style="left:48.25px;top:128px" width="15" height="15" viewBox="0 0 15 15" ><defs><linearGradient id="fg7" x1="0" y1="0" x2="0" y2="1"><stop offset="0" stop-color="#fcec9c"/><stop offset="0.5" stop-color="#f6d858"/><stop offset="1" stop-color="#eec02c"/></linearGradient></defs>
<rect x="0.5" y="0.5" width="13" height="13.2" rx="2.2" fill="url(#fg7)" stroke="#c49e24"/>
<path d="M9 3.200Q7.200 2.600 6.800 5L5.800 10.200Q5.400 12 3.800 11.400M4.800 6.600H8.600" fill="none" stroke="#9a7414" stroke-width="1.200" stroke-linecap="round"/>
<path d="M11.250 8l3.300 3.300-3.300 3.300-3.300-3.300z" fill="#b4b4b4" stroke="#6e6e6e" stroke-width="0.800"/></svg>
<div class="t " style="left:70.20px;top:129px;letter-spacing:-1.007px;">DT_ZZ</div>
<div class="a" style="left:36px;top:155px;width:11px;height:1px;background:repeating-linear-gradient(90deg,#808080 0 1px,transparent 1px 2px)"></div>
<svg style="left:48.25px;top:146px" width="15" height="15" viewBox="0 0 15 15" ><defs><linearGradient id="fg8" x1="0" y1="0" x2="0" y2="1"><stop offset="0" stop-color="#fcec9c"/><stop offset="0.5" stop-color="#f6d858"/><stop offset="1" stop-color="#eec02c"/></linearGradient></defs>
<rect x="0.5" y="0.5" width="13" height="13.2" rx="2.2" fill="url(#fg8)" stroke="#c49e24"/>
<path d="M9 3.200Q7.200 2.600 6.800 5L5.800 10.200Q5.400 12 3.800 11.400M4.800 6.600H8.600" fill="none" stroke="#9a7414" stroke-width="1.200" stroke-linecap="round"/>
<path d="M11.250 8l3.300 3.300-3.300 3.300-3.300-3.300z" fill="#b4b4b4" stroke="#6e6e6e" stroke-width="0.800"/></svg>
<div class="t " style="left:70.20px;top:147px;letter-spacing:-0.029px;">Dynamic Double Zone Digita</div>
<div class="a" style="left:36px;top:173px;width:11px;height:1px;background:repeating-linear-gradient(90deg,#808080 0 1px,transparent 1px 2px)"></div>
<svg style="left:48.25px;top:164px" width="15" height="15" viewBox="0 0 15 15" ><defs><linearGradient id="fg9" x1="0" y1="0" x2="0" y2="1"><stop offset="0" stop-color="#fcec9c"/><stop offset="0.5" stop-color="#f6d858"/><stop offset="1" stop-color="#eec02c"/></linearGradient></defs>
<rect x="0.5" y="0.5" width="13" height="13.2" rx="2.2" fill="url(#fg9)" stroke="#c49e24"/>
<path d="M9 3.200Q7.200 2.600 6.800 5L5.800 10.200Q5.400 12 3.800 11.400M4.800 6.600H8.600" fill="none" stroke="#9a7414" stroke-width="1.200" stroke-linecap="round"/>
<path d="M11.250 8l3.300 3.300-3.300 3.300-3.300-3.300z" fill="#b4b4b4" stroke="#6e6e6e" stroke-width="0.800"/></svg>
<div class="t " style="left:70.20px;top:165px;letter-spacing:-0.094px;">dynamic zone - ehlers fisher</div>
<div class="a" style="left:36px;top:191px;width:11px;height:1px;background:repeating-linear-gradient(90deg,#808080 0 1px,transparent 1px 2px)"></div>
<svg style="left:48.25px;top:182px" width="15" height="15" viewBox="0 0 15 15" ><defs><linearGradient id="fg10" x1="0" y1="0" x2="0" y2="1"><stop offset="0" stop-color="#fcec9c"/><stop offset="0.5" stop-color="#f6d858"/><stop offset="1" stop-color="#eec02c"/></linearGradient></defs>
<rect x="0.5" y="0.5" width="13" height="13.2" rx="2.2" fill="url(#fg10)" stroke="#c49e24"/>
<path d="M9 3.200Q7.200 2.600 6.800 5L5.800 10.200Q5.400 12 3.800 11.400M4.800 6.600H8.600" fill="none" stroke="#9a7414" stroke-width="1.200" stroke-linecap="round"/>
<path d="M11.250 8l3.300 3.300-3.300 3.300-3.300-3.300z" fill="#b4b4b4" stroke="#6e6e6e" stroke-width="0.800"/></svg>
<div class="t " style="left:70.20px;top:183px;letter-spacing:-0.108px;">Dynamic zone Value chart St</div>
<div class="a" style="left:36px;top:209px;width:11px;height:1px;background:repeating-linear-gradient(90deg,#808080 0 1px,transparent 1px 2px)"></div>
<svg style="left:48.25px;top:200px" width="15" height="15" viewBox="0 0 15 15" ><defs><linearGradient id="fg11" x1="0" y1="0" x2="0" y2="1"><stop offset="0" stop-color="#fcec9c"/><stop offset="0.5" stop-color="#f6d858"/><stop offset="1" stop-color="#eec02c"/></linearGradient></defs>
<rect x="0.5" y="0.5" width="13" height="13.2" rx="2.2" fill="url(#fg11)" stroke="#c49e24"/>
<path d="M9 3.200Q7.200 2.600 6.800 5L5.800 10.200Q5.400 12 3.800 11.400M4.800 6.600H8.600" fill="none" stroke="#9a7414" stroke-width="1.200" stroke-linecap="round"/>
<path d="M11.250 8l3.300 3.300-3.300 3.300-3.300-3.300z" fill="#b4b4b4" stroke="#6e6e6e" stroke-width="0.800"/></svg>
<div class="t " style="left:70.20px;top:201px;letter-spacing:-0.374px;">Dynamic zones EFT macd av</div>
<div class="a" style="left:36px;top:227px;width:11px;height:1px;background:repeating-linear-gradient(90deg,#808080 0 1px,transparent 1px 2px)"></div>
<svg style="left:48.25px;top:218px" width="15" height="15" viewBox="0 0 15 15" ><defs><linearGradient id="fg12" x1="0" y1="0" x2="0" y2="1"><stop offset="0" stop-color="#fcec9c"/><stop offset="0.5" stop-color="#f6d858"/><stop offset="1" stop-color="#eec02c"/></linearGradient></defs>
<rect x="0.5" y="0.5" width="13" height="13.2" rx="2.2" fill="url(#fg12)" stroke="#c49e24"/>
<path d="M9 3.200Q7.200 2.600 6.800 5L5.800 10.200Q5.400 12 3.800 11.400M4.800 6.600H8.600" fill="none" stroke="#9a7414" stroke-width="1.200" stroke-linecap="round"/>
<path d="M11.250 8l3.300 3.300-3.300 3.300-3.300-3.300z" fill="#b4b4b4" stroke="#6e6e6e" stroke-width="0.800"/></svg>
<div class="t " style="left:70.20px;top:219px;letter-spacing:-0.065px;">Dynamic zones kst (mtf + ba</div>
<div class="a" style="left:218px;top:0px;width:17px;height:228px;background:#f0f0f0;"></div>
<div class="a" style="left:218px;top:72px;width:15px;height:17px;background:#cdcdcd;"></div>
</div>
<div class="a" style="left:3px;top:386px;width:1px;height:230px;background:#a9a9a9;"></div>
<svg style="left:224px;top:393.2px" width="9.2" height="7.6" viewBox="0 0 9.2 7.6" ><path d="M1.2 5.500L4.600 2.100L8 5.500" fill="none" stroke="#555" stroke-width="1.900"/></svg>
<svg style="left:224px;top:602.5px" width="9.2" height="7.6" viewBox="0 0 9.2 7.6" ><path d="M1.2 2.100L4.600 5.500L8 2.100" fill="none" stroke="#555" stroke-width="1.900"/></svg>
<div class="a" style="left:6px;top:616px;width:71px;height:20px;background:#fff;border:1px solid #000;border-top:none"></div>
<div class="a" style="left:7px;top:615px;width:69px;height:2px;background:#fff;"></div>
<div class="t " style="left:16.50px;top:618px;letter-spacing:0.222px;">Common</div>
<div class="t g" style="left:87.70px;top:618px;letter-spacing:-0.455px;">Favorites</div>
<div class="a" style="left:144px;top:620px;width:1px;height:13px;background:#707070;"></div>
<div class="a" style="left:239px;top:98px;width:1px;height:540px;background:#fff;"></div>
<div class="a" style="left:0px;top:637px;width:240px;height:1px;background:#fff;"></div>
<div class="a" style="left:241px;top:98px;width:1px;height:543px;background:#a0a0a0;"></div>
<div class="a" style="left:0px;top:640px;width:242px;height:1px;background:#a0a0a0;"></div>
<!-- chart_area -->
<div class="a" style="left:242px;top:98px;width:1037px;height:524px;background:#000;"></div>
<div class="a" style="left:242px;top:98px;width:1037px;height:1px;background:#696969;"></div>
<div class="a" style="left:242px;top:98px;width:1px;height:543px;background:#696969;"></div>
<div class="a" style="left:1278px;top:98px;width:1px;height:522px;background:#e3e3e3;"></div>
<div class="a" style="left:242px;top:620px;width:1037px;height:1px;background:#fff;"></div>
<div class="a" style="left:242px;top:621px;width:1037px;height:1px;background:#000;"></div>
<svg class="a" style="left:0;top:0" width="1279" height="800" viewBox="0 0 1279 800" shape-rendering="crispEdges">
<defs><clipPath id="cm"><rect x="246" y="102" width="989" height="347"/></clipPath></defs>
<rect x="245.5" y="101.5" width="990" height="348" fill="none" stroke="#fff"/>
<rect x="245.5" y="451.5" width="990" height="20" fill="none" stroke="#fff"/>
<path d="M245.5 599 V473.5 H1235.5 V598.5 H246" fill="none" stroke="#fff"/>
<g clip-path="url(#cm)">
<rect x="246" y="235" width="1" height="20" fill="#0000ff"/>
<rect x="244" y="242" width="5" height="13" fill="#0000ff"/>
<rect x="254" y="221" width="1" height="47" fill="#0000ff"/>
<rect x="252" y="247" width="5" height="2" fill="#0000ff"/>
<rect x="262" y="247" width="1" height="68" fill="#f4a460"/>
<rect x="260" y="247" width="5" height="41" fill="#f4a460"/>
<rect x="270" y="267" width="1" height="48" fill="#f4a460"/>
<rect x="268" y="267" width="5" height="36" fill="#f4a460"/>
<rect x="278" y="285" width="1" height="17" fill="#f4a460"/>
<rect x="276" y="285" width="5" height="12" fill="#f4a460"/>
<rect x="286" y="290" width="1" height="24" fill="#f4a460"/>
<rect x="284" y="290" width="5" height="13" fill="#f4a460"/>
<rect x="294" y="296" width="1" height="39" fill="#f4a460"/>
<rect x="292" y="296" width="5" height="21" fill="#f4a460"/>
<rect x="302" y="306" width="1" height="108" fill="#f4a460"/>
<rect x="300" y="306" width="5" height="54" fill="#f4a460"/>
<rect x="310" y="333" width="1" height="84" fill="#f4a460"/>
<rect x="308" y="333" width="5" height="49" fill="#f4a460"/>
<rect x="318" y="338" width="1" height="63" fill="#f4a460"/>
<rect x="316" y="357" width="5" height="14" fill="#f4a460"/>
<rect x="326" y="364" width="1" height="74" fill="#f4a460"/>
<rect x="324" y="364" width="5" height="38" fill="#f4a460"/>
<rect x="334" y="382" width="1" height="38" fill="#f4a460"/>
<rect x="332" y="382" width="5" height="23" fill="#f4a460"/>
<rect x="342" y="385" width="1" height="36" fill="#f4a460"/>
<rect x="340" y="393" width="5" height="11" fill="#f4a460"/>
<rect x="350" y="343" width="1" height="69" fill="#0000ff"/>
<rect x="348" y="376" width="5" height="23" fill="#0000ff"/>
<rect x="358" y="313" width="1" height="75" fill="#0000ff"/>
<rect x="356" y="342" width="5" height="46" fill="#0000ff"/>
<rect x="366" y="289" width="1" height="77" fill="#0000ff"/>
<rect x="364" y="318" width="5" height="48" fill="#0000ff"/>
<rect x="374" y="302" width="1" height="41" fill="#0000ff"/>
<rect x="372" y="308" width="5" height="35" fill="#0000ff"/>
<rect x="382" y="303" width="1" height="32" fill="#0000ff"/>
<rect x="380" y="315" width="5" height="11" fill="#0000ff"/>
<rect x="390" y="309" width="1" height="29" fill="#f4a460"/>
<rect x="388" y="318" width="5" height="3" fill="#f4a460"/>
<rect x="398" y="268" width="1" height="56" fill="#0000ff"/>
<rect x="396" y="295" width="5" height="26" fill="#0000ff"/>
<rect x="406" y="266" width="1" height="44" fill="#0000ff"/>
<rect x="404" y="287" width="5" height="21" fill="#0000ff"/>
<rect x="414" y="289" width="1" height="56" fill="#f4a460"/>
<rect x="412" y="297" width="5" height="17" fill="#f4a460"/>
<rect x="422" y="289" width="1" height="28" fill="#0000ff"/>
<rect x="420" y="303" width="5" height="3" fill="#0000ff"/>
<rect x="430" y="286" width="1" height="19" fill="#0000ff"/>
<rect x="428" y="292" width="5" height="13" fill="#0000ff"/>
<rect x="438" y="268" width="1" height="31" fill="#0000ff"/>
<rect x="436" y="285" width="5" height="14" fill="#0000ff"/>
<rect x="446" y="262" width="1" height="34" fill="#0000ff"/>
<rect x="444" y="279" width="5" height="13" fill="#0000ff"/>
<rect x="454" y="247" width="1" height="39" fill="#0000ff"/>
<rect x="452" y="264" width="5" height="22" fill="#0000ff"/>
<rect x="462" y="243" width="1" height="55" fill="#0000ff"/>
<rect x="460" y="266" width="5" height="10" fill="#0000ff"/>
<rect x="470" y="264" width="1" height="11" fill="#0000ff"/>
<rect x="468" y="268" width="5" height="3" fill="#0000ff"/>
<rect x="478" y="242" width="1" height="32" fill="#0000ff"/>
<rect x="476" y="257" width="5" height="13" fill="#0000ff"/>
<rect x="486" y="238" width="1" height="26" fill="#0000ff"/>
<rect x="484" y="244" width="5" height="20" fill="#0000ff"/>
<rect x="494" y="228" width="1" height="29" fill="#0000ff"/>
<rect x="492" y="240" width="5" height="15" fill="#0000ff"/>
<rect x="502" y="212" width="1" height="36" fill="#0000ff"/>
<rect x="500" y="230" width="5" height="18" fill="#0000ff"/>
<rect x="510" y="224" width="1" height="27" fill="#0000ff"/>
<rect x="508" y="237" width="5" height="3" fill="#0000ff"/>
<rect x="518" y="223" width="1" height="19" fill="#0000ff"/>
<rect x="516" y="232" width="5" height="7" fill="#0000ff"/>
<rect x="526" y="211" width="1" height="25" fill="#0000ff"/>
<rect x="524" y="222" width="5" height="14" fill="#0000ff"/>
<rect x="534" y="218" width="1" height="17" fill="#0000ff"/>
<rect x="532" y="224" width="5" height="6" fill="#0000ff"/>
<rect x="542" y="212" width="1" height="20" fill="#0000ff"/>
<rect x="540" y="223" width="5" height="5" fill="#0000ff"/>
<rect x="550" y="222" width="1" height="35" fill="#f4a460"/>
<rect x="548" y="225" width="5" height="15" fill="#f4a460"/>
<rect x="558" y="225" width="1" height="38" fill="#f4a460"/>
<rect x="556" y="232" width="5" height="12" fill="#f4a460"/>
<rect x="566" y="213" width="1" height="25" fill="#0000ff"/>
<rect x="564" y="222" width="5" height="16" fill="#0000ff"/>
<rect x="574" y="199" width="1" height="31" fill="#0000ff"/>
<rect x="572" y="210" width="5" height="20" fill="#0000ff"/>
<rect x="582" y="197" width="1" height="24" fill="#0000ff"/>
<rect x="580" y="205" width="5" height="16" fill="#0000ff"/>
<rect x="590" y="162" width="1" height="51" fill="#0000ff"/>
<rect x="588" y="189" width="5" height="24" fill="#0000ff"/>
<rect x="598" y="148" width="1" height="53" fill="#0000ff"/>
<rect x="596" y="169" width="5" height="32" fill="#0000ff"/>
<rect x="606" y="153" width="1" height="33" fill="#0000ff"/>
<rect x="604" y="161" width="5" height="25" fill="#0000ff"/>
<rect x="614" y="150" width="1" height="24" fill="#0000ff"/>
<rect x="612" y="156" width="5" height="18" fill="#0000ff"/>
<rect x="622" y="141" width="1" height="24" fill="#0000ff"/>
<rect x="620" y="149" width="5" height="16" fill="#0000ff"/>
<rect x="630" y="143" width="1" height="23" fill="#0000ff"/>
<rect x="628" y="153" width="5" height="5" fill="#0000ff"/>
<rect x="638" y="131" width="1" height="30" fill="#0000ff"/>
<rect x="636" y="148" width="5" height="8" fill="#0000ff"/>
<rect x="646" y="126" width="1" height="26" fill="#0000ff"/>
<rect x="644" y="134" width="5" height="18" fill="#0000ff"/>
<rect x="654" y="126" width="1" height="40" fill="#f4a460"/>
<rect x="652" y="143" width="5" height="3" fill="#f4a460"/>
<rect x="662" y="144" width="1" height="34" fill="#f4a460"/>
<rect x="660" y="144" width="5" height="23" fill="#f4a460"/>
<rect x="670" y="155" width="1" height="25" fill="#f4a460"/>
<rect x="668" y="155" width="5" height="12" fill="#f4a460"/>
<rect x="678" y="154" width="1" height="22" fill="#f4a460"/>
<rect x="676" y="161" width="5" height="4" fill="#f4a460"/>
<rect x="686" y="162" width="1" height="59" fill="#f4a460"/>
<rect x="684" y="162" width="5" height="31" fill="#f4a460"/>
<rect x="694" y="177" width="1" height="64" fill="#f4a460"/>
<rect x="692" y="177" width="5" height="44" fill="#f4a460"/>
<rect x="702" y="197" width="1" height="22" fill="#f4a460"/>
<rect x="700" y="199" width="5" height="9" fill="#f4a460"/>
<rect x="710" y="198" width="1" height="12" fill="#0000ff"/>
<rect x="708" y="201" width="5" height="3" fill="#0000ff"/>
<rect x="718" y="186" width="1" height="27" fill="#0000ff"/>
<rect x="716" y="199" width="5" height="4" fill="#0000ff"/>
<rect x="726" y="162" width="1" height="40" fill="#0000ff"/>
<rect x="724" y="176" width="5" height="26" fill="#0000ff"/>
<rect x="734" y="135" width="1" height="54" fill="#0000ff"/>
<rect x="732" y="158" width="5" height="31" fill="#0000ff"/>
<rect x="742" y="151" width="1" height="23" fill="#0000ff"/>
<rect x="740" y="160" width="5" height="14" fill="#0000ff"/>
<rect x="750" y="144" width="1" height="24" fill="#0000ff"/>
<rect x="748" y="154" width="5" height="14" fill="#0000ff"/>
<rect x="758" y="151" width="1" height="11" fill="#0000ff"/>
<rect x="756" y="156" width="5" height="6" fill="#0000ff"/>
<rect x="766" y="138" width="1" height="25" fill="#0000ff"/>
<rect x="764" y="154" width="5" height="5" fill="#0000ff"/>
<rect x="774" y="140" width="1" height="27" fill="#0000ff"/>
<rect x="772" y="152" width="5" height="5" fill="#0000ff"/>
<rect x="782" y="123" width="1" height="34" fill="#0000ff"/>
<rect x="780" y="140" width="5" height="15" fill="#0000ff"/>
<rect x="790" y="130" width="1" height="18" fill="#0000ff"/>
<rect x="788" y="137" width="5" height="11" fill="#0000ff"/>
<rect x="798" y="131" width="1" height="19" fill="#0000ff"/>
<rect x="796" y="141" width="5" height="2" fill="#0000ff"/>
<rect x="806" y="140" width="1" height="24" fill="#f4a460"/>
<rect x="804" y="141" width="5" height="15" fill="#f4a460"/>
<rect x="814" y="147" width="1" height="16" fill="#f4a460"/>
<rect x="812" y="148" width="5" height="8" fill="#f4a460"/>
<rect x="822" y="140" width="1" height="13" fill="#0000ff"/>
<rect x="820" y="146" width="5" height="6" fill="#0000ff"/>
<rect x="830" y="139" width="1" height="17" fill="#0000ff"/>
<rect x="828" y="145" width="5" height="5" fill="#0000ff"/>
<rect x="838" y="131" width="1" height="17" fill="#0000ff"/>
<rect x="836" y="138" width="5" height="10" fill="#0000ff"/>
<rect x="846" y="128" width="1" height="20" fill="#0000ff"/>
<rect x="844" y="134" width="5" height="10" fill="#0000ff"/>
<rect x="854" y="122" width="1" height="19" fill="#0000ff"/>
<rect x="852" y="130" width="5" height="10" fill="#0000ff"/>
<rect x="862" y="130" width="1" height="15" fill="#f4a460"/>
<rect x="860" y="134" width="5" height="2" fill="#f4a460"/>
<rect x="870" y="129" width="1" height="12" fill="#0000ff"/>
<rect x="868" y="134" width="5" height="3" fill="#0000ff"/>
<rect x="878" y="133" width="1" height="16" fill="#f4a460"/>
<rect x="876" y="134" width="5" height="5" fill="#f4a460"/>
<rect x="886" y="121" width="1" height="93" fill="#f4a460"/>
<rect x="884" y="137" width="5" height="33" fill="#f4a460"/>
<rect x="894" y="153" width="1" height="81" fill="#f4a460"/>
<rect x="892" y="153" width="5" height="63" fill="#f4a460"/>
<rect x="902" y="184" width="1" height="73" fill="#f4a460"/>
<rect x="900" y="184" width="5" height="55" fill="#f4a460"/>
<rect x="910" y="211" width="1" height="54" fill="#f4a460"/>
<rect x="908" y="211" width="5" height="46" fill="#f4a460"/>
<rect x="918" y="233" width="1" height="34" fill="#f4a460"/>
<rect x="916" y="233" width="5" height="21" fill="#f4a460"/>
<rect x="926" y="232" width="1" height="27" fill="#f4a460"/>
<rect x="924" y="243" width="5" height="2" fill="#f4a460"/>
<rect x="934" y="227" width="1" height="36" fill="#0000ff"/>
<rect x="932" y="243" width="5" height="2" fill="#0000ff"/>
<rect x="942" y="223" width="1" height="22" fill="#0000ff"/>
<rect x="940" y="233" width="5" height="12" fill="#0000ff"/>
<rect x="950" y="225" width="1" height="14" fill="#0000ff"/>
<rect x="948" y="229" width="5" height="10" fill="#0000ff"/>
<rect x="958" y="225" width="1" height="29" fill="#f4a460"/>
<rect x="956" y="234" width="5" height="8" fill="#f4a460"/>
<rect x="966" y="237" width="1" height="25" fill="#f4a460"/>
<rect x="964" y="237" width="5" height="14" fill="#f4a460"/>
<rect x="974" y="242" width="1" height="19" fill="#f4a460"/>
<rect x="972" y="244" width="5" height="5" fill="#f4a460"/>
<rect x="982" y="227" width="1" height="20" fill="#0000ff"/>
<rect x="980" y="239" width="5" height="8" fill="#0000ff"/>
<rect x="990" y="238" width="1" height="6" fill="#0000ff"/>
<rect x="988" y="241" width="5" height="3" fill="#0000ff"/>
</g>
<g shape-rendering="auto">
<polyline points="246,186.5 270,192 300,198.5 325,203 355,206 404,206.5 418,206 434,204 480,200 520,194.5 560,188.5 590,181 620,172.5 650,164 680,158 716,153.5 750,147.5 790,142 810,140 835,137.5 872,136.3 884,136.5 900,137.5 925,139 955,141 990,143.5" fill="none" stroke="#5c6873" stroke-width="1.2"/>
<rect x="246" y="241" width="990" height="1" fill="#fff" shape-rendering="crispEdges"/>
<polyline points="246,264 262,268 278,273 294,281 310,291 322,300 336,309 350,316 364,318 404,318.5 418,318 434,316.5 480,308 520,301 548,295 560,293 600,284 630,277 660,270 690,264 716,259.5 736,255.5 760,251 780,248 800,245.5 820,244 840,242.5 866,241.5 891,241.5 905,243 920,244.5 935,246 950,247 965,248 985,249.5 990,250.5" fill="none" stroke="#5c6873" stroke-width="1.2"/>
<rect x="866" y="241" width="25" height="1" fill="#5c6873" shape-rendering="crispEdges"/>
</g>
<rect x="247" y="235" width="2" height="1" fill="#008000"/>
<rect x="252" y="235" width="2" height="1" fill="#ff0000"/>
<rect x="255" y="265" width="2" height="1" fill="#ff0000"/>
<rect x="399" y="269" width="2" height="1" fill="#008000"/>
<rect x="263" y="310" width="2" height="1" fill="#ff0000"/>
<rect x="268" y="310" width="2" height="1" fill="#008000"/>
<rect x="287" y="308" width="2" height="1" fill="#ff0000"/>
<rect x="367" y="305" width="2" height="1" fill="#008000"/>
<rect x="372" y="305" width="2" height="1" fill="#ff0000"/>
<rect x="375" y="306" width="2" height="1" fill="#ff0000"/>
<rect x="380" y="306" width="2" height="1" fill="#ff0000"/>
<rect x="359" y="333" width="2" height="1" fill="#008000"/>
<rect x="351" y="354" width="2" height="1" fill="#008000"/>
<rect x="303" y="399" width="2" height="1" fill="#ff0000"/>
<rect x="308" y="399" width="2" height="1" fill="#008000"/>
<rect x="319" y="386" width="2" height="1" fill="#ff0000"/>
<rect x="335" y="411" width="2" height="1" fill="#ff0000"/>
<rect x="340" y="411" width="2" height="1" fill="#008000"/>
<rect x="404" y="269" width="2" height="1" fill="#ff0000"/>
<rect x="423" y="294" width="2" height="1" fill="#008000"/>
<rect x="420" y="312" width="2" height="1" fill="#008000"/>
<rect x="431" y="290" width="2" height="1" fill="#008000"/>
<rect x="439" y="283" width="2" height="1" fill="#008000"/>
<rect x="447" y="274" width="2" height="1" fill="#008000"/>
<rect x="455" y="258" width="2" height="1" fill="#008000"/>
<rect x="460" y="258" width="2" height="1" fill="#ff0000"/>
<rect x="468" y="266" width="2" height="1" fill="#ff0000"/>
<rect x="476" y="270" width="2" height="1" fill="#008000"/>
<rect x="551" y="254" width="2" height="1" fill="#ff0000"/>
<rect x="556" y="253" width="2" height="1" fill="#008000"/>
<rect x="479" y="244" width="2" height="1" fill="#008000"/>
<rect x="487" y="241" width="2" height="1" fill="#008000"/>
<rect x="495" y="236" width="2" height="1" fill="#008000"/>
<rect x="508" y="234" width="2" height="1" fill="#ff0000"/>
<rect x="511" y="241" width="2" height="1" fill="#ff0000"/>
<rect x="516" y="241" width="2" height="1" fill="#008000"/>
<rect x="519" y="225" width="2" height="1" fill="#008000"/>
<rect x="532" y="223" width="2" height="1" fill="#ff0000"/>
<rect x="535" y="223" width="2" height="1" fill="#ff0000"/>
<rect x="559" y="230" width="2" height="1" fill="#008000"/>
<rect x="567" y="214" width="2" height="1" fill="#008000"/>
<rect x="575" y="207" width="2" height="1" fill="#008000"/>
<rect x="591" y="181" width="2" height="1" fill="#008000"/>
<rect x="663" y="171" width="2" height="1" fill="#ff0000"/>
<rect x="668" y="171" width="2" height="1" fill="#008000"/>
<rect x="687" y="217" width="2" height="1" fill="#ff0000"/>
<rect x="700" y="212" width="2" height="1" fill="#008000"/>
<rect x="708" y="200" width="2" height="1" fill="#008000"/>
<rect x="711" y="199" width="2" height="1" fill="#008000"/>
<rect x="599" y="165" width="2" height="1" fill="#008000"/>
<rect x="607" y="156" width="2" height="1" fill="#008000"/>
<rect x="615" y="153" width="2" height="1" fill="#008000"/>
<rect x="623" y="145" width="2" height="1" fill="#008000"/>
<rect x="628" y="145" width="2" height="1" fill="#ff0000"/>
<rect x="631" y="160" width="2" height="1" fill="#ff0000"/>
<rect x="636" y="160" width="2" height="1" fill="#008000"/>
<rect x="639" y="140" width="2" height="1" fill="#008000"/>
<rect x="647" y="130" width="2" height="1" fill="#008000"/>
<rect x="652" y="129" width="2" height="1" fill="#ff0000"/>
<rect x="655" y="159" width="2" height="1" fill="#ff0000"/>
<rect x="676" y="159" width="2" height="1" fill="#ff0000"/>
<rect x="679" y="169" width="2" height="1" fill="#ff0000"/>
<rect x="719" y="187" width="2" height="1" fill="#008000"/>
<rect x="727" y="164" width="2" height="1" fill="#008000"/>
<rect x="743" y="157" width="2" height="1" fill="#008000"/>
<rect x="772" y="158" width="2" height="1" fill="#008000"/>
<rect x="775" y="143" width="2" height="1" fill="#008000"/>
<rect x="783" y="139" width="2" height="1" fill="#008000"/>
<rect x="791" y="131" width="2" height="1" fill="#008000"/>
<rect x="796" y="131" width="2" height="1" fill="#ff0000"/>
<rect x="799" y="149" width="2" height="1" fill="#ff0000"/>
<rect x="807" y="159" width="2" height="1" fill="#ff0000"/>
<rect x="812" y="159" width="2" height="1" fill="#008000"/>
<rect x="820" y="152" width="2" height="1" fill="#008000"/>
<rect x="823" y="142" width="2" height="1" fill="#008000"/>
<rect x="828" y="142" width="2" height="1" fill="#ff0000"/>
<rect x="831" y="143" width="2" height="1" fill="#ff0000"/>
<rect x="839" y="134" width="2" height="1" fill="#008000"/>
<rect x="847" y="129" width="2" height="1" fill="#008000"/>
<rect x="852" y="129" width="2" height="1" fill="#ff0000"/>
<rect x="860" y="132" width="2" height="1" fill="#ff0000"/>
<rect x="863" y="133" width="2" height="1" fill="#ff0000"/>
<rect x="868" y="133" width="2" height="1" fill="#ff0000"/>
<rect x="716" y="211" width="2" height="1" fill="#008000"/>
<rect x="887" y="207" width="2" height="1" fill="#ff0000"/>
<rect x="895" y="224" width="2" height="1" fill="#ff0000"/>
<rect x="903" y="252" width="2" height="1" fill="#ff0000"/>
<rect x="911" y="262" width="2" height="1" fill="#ff0000"/>
<rect x="916" y="262" width="2" height="1" fill="#008000"/>
<rect x="932" y="245" width="2" height="1" fill="#008000"/>
<rect x="935" y="239" width="2" height="1" fill="#008000"/>
<rect x="943" y="231" width="2" height="1" fill="#008000"/>
<rect x="951" y="226" width="2" height="1" fill="#008000"/>
<rect x="959" y="251" width="2" height="1" fill="#ff0000"/>
<rect x="964" y="251" width="2" height="1" fill="#008000"/>
<rect x="988" y="239" width="2" height="1" fill="#ff0000"/>
<rect x="326" y="438" width="83" height="4" rx="2" fill="#708090" shape-rendering="auto"/>
<rect x="877" y="117" width="83" height="4" rx="2" fill="#708090" shape-rendering="auto"/>
<g shape-rendering="auto">
<circle cx="646" cy="123" r="3.2" fill="#00bfff"/>
<circle cx="854" cy="119" r="3.2" fill="#00bfff"/>
<circle cx="325.5" cy="440" r="2.8" fill="#fff" stroke="#9cc0ff" stroke-width="0.8"/>
<circle cx="694" cy="244.5" r="3" fill="#fff"/>
<circle cx="910" cy="267" r="3" fill="#fff"/>
<path d="M1001 102 H1012 L1006.5 107.5 Z" fill="#fff"/>
</g>
<rect x="1236" y="116" width="3" height="1" fill="#fff"/>
<rect x="1236" y="149" width="3" height="1" fill="#fff"/>
<rect x="1236" y="182" width="3" height="1" fill="#fff"/>
<rect x="1236" y="215" width="3" height="1" fill="#fff"/>
<rect x="1236" y="248" width="3" height="1" fill="#fff"/>
<rect x="1236" y="281" width="3" height="1" fill="#fff"/>
<rect x="1236" y="314" width="3" height="1" fill="#fff"/>
<rect x="1236" y="347" width="3" height="1" fill="#fff"/>
<rect x="1236" y="380" width="3" height="1" fill="#fff"/>
<rect x="1236" y="413" width="3" height="1" fill="#fff"/>
<rect x="1236" y="446" width="3" height="1" fill="#fff"/>
<rect x="247" y="452" width="3" height="18" fill="#f4a460"/>
<rect x="251" y="452" width="7" height="18" fill="#f4a460"/>
<rect x="259" y="452" width="7" height="18" fill="#f4a460"/>
<rect x="267" y="452" width="7" height="18" fill="#f4a460"/>
<rect x="275" y="452" width="7" height="18" fill="#f4a460"/>
<rect x="283" y="452" width="7" height="18" fill="#f4a460"/>
<rect x="291" y="452" width="7" height="18" fill="#f4a460"/>
<rect x="299" y="452" width="7" height="18" fill="#f4a460"/>
<rect x="307" y="452" width="7" height="18" fill="#f4a460"/>
<rect x="315" y="452" width="7" height="18" fill="#f4a460"/>
<rect x="323" y="452" width="7" height="18" fill="#f4a460"/>
<rect x="331" y="452" width="7" height="18" fill="#f4a460"/>
<rect x="339" y="452" width="7" height="18" fill="#f4a460"/>
<rect x="347" y="452" width="7" height="18" fill="#f4a460"/>
<rect x="355" y="452" width="7" height="18" fill="#f4a460"/>
<rect x="363" y="452" width="7" height="18" fill="#0000ff"/>
<rect x="371" y="452" width="7" height="18" fill="#0000ff"/>
<rect x="379" y="452" width="7" height="18" fill="#0000ff"/>
<rect x="387" y="452" width="7" height="18" fill="#0000ff"/>
<rect x="395" y="452" width="7" height="18" fill="#0000ff"/>
<rect x="403" y="452" width="7" height="18" fill="#0000ff"/>
<rect x="411" y="452" width="7" height="18" fill="#0000ff"/>
<rect x="419" y="452" width="7" height="18" fill="#0000ff"/>
<rect x="427" y="452" width="7" height="18" fill="#0000ff"/>
<rect x="435" y="452" width="7" height="18" fill="#0000ff"/>
<rect x="443" y="452" width="7" height="18" fill="#0000ff"/>
<rect x="451" y="452" width="7" height="18" fill="#0000ff"/>
<rect x="459" y="452" width="7" height="18" fill="#0000ff"/>
<rect x="467" y="452" width="7" height="18" fill="#0000ff"/>
<rect x="475" y="452" width="7" height="18" fill="#0000ff"/>
<rect x="483" y="452" width="7" height="18" fill="#0000ff"/>
<rect x="491" y="452" width="7" height="18" fill="#0000ff"/>
<rect x="499" y="452" width="7" height="18" fill="#0000ff"/>
<rect x="507" y="452" width="7" height="18" fill="#0000ff"/>
<rect x="515" y="452" width="7" height="18" fill="#0000ff"/>
<rect x="523" y="452" width="7" height="18" fill="#0000ff"/>
<rect x="531" y="452" width="7" height="18" fill="#0000ff"/>
<rect x="539" y="452" width="7" height="18" fill="#0000ff"/>
<rect x="547" y="452" width="7" height="18" fill="#0000ff"/>
<rect x="555" y="452" width="7" height="18" fill="#0000ff"/>
<rect x="563" y="452" width="7" height="18" fill="#0000ff"/>
<rect x="571" y="452" width="7" height="18" fill="#0000ff"/>
<rect x="579" y="452" width="7" height="18" fill="#0000ff"/>
<rect x="587" y="452" width="7" height="18" fill="#0000ff"/>
<rect x="595" y="452" width="7" height="18" fill="#0000ff"/>
<rect x="603" y="452" width="7" height="18" fill="#0000ff"/>
<rect x="611" y="452" width="7" height="18" fill="#0000ff"/>
<rect x="619" y="452" width="7" height="18" fill="#0000ff"/>
<rect x="627" y="452" width="7" height="18" fill="#0000ff"/>
<rect x="635" y="452" width="7" height="18" fill="#0000ff"/>
<rect x="643" y="452" width="7" height="18" fill="#0000ff"/>
<rect x="651" y="452" width="7" height="18" fill="#0000ff"/>
<rect x="659" y="452" width="7" height="18" fill="#0000ff"/>
<rect x="667" y="452" width="7" height="18" fill="#0000ff"/>
<rect x="675" y="452" width="7" height="18" fill="#0000ff"/>
<rect x="683" y="452" width="7" height="18" fill="#f4a460"/>
<rect x="691" y="452" width="7" height="18" fill="#f4a460"/>
<rect x="699" y="452" width="7" height="18" fill="#f4a460"/>
<rect x="707" y="452" width="7" height="18" fill="#f4a460"/>
<rect x="715" y="452" width="7" height="18" fill="#f4a460"/>
<rect x="723" y="452" width="7" height="18" fill="#f4a460"/>
<rect x="731" y="452" width="7" height="18" fill="#f4a460"/>
<rect x="739" y="452" width="7" height="18" fill="#f4a460"/>
<rect x="747" y="452" width="7" height="18" fill="#f4a460"/>
<rect x="755" y="452" width="7" height="18" fill="#f4a460"/>
<rect x="763" y="452" width="7" height="18" fill="#f4a460"/>
<rect x="771" y="452" width="7" height="18" fill="#f4a460"/>
<rect x="779" y="452" width="7" height="18" fill="#f4a460"/>
<rect x="787" y="452" width="7" height="18" fill="#f4a460"/>
<rect x="795" y="452" width="7" height="18" fill="#f4a460"/>
<rect x="803" y="452" width="7" height="18" fill="#f4a460"/>
<rect x="811" y="452" width="7" height="18" fill="#f4a460"/>
<rect x="819" y="452" width="7" height="18" fill="#f4a460"/>
<rect x="827" y="452" width="7" height="18" fill="#f4a460"/>
<rect x="835" y="452" width="7" height="18" fill="#f4a460"/>
<rect x="843" y="452" width="7" height="18" fill="#0000ff"/>
<rect x="851" y="452" width="7" height="18" fill="#0000ff"/>
<rect x="859" y="452" width="7" height="18" fill="#0000ff"/>
<rect x="867" y="452" width="7" height="18" fill="#0000ff"/>
<rect x="875" y="452" width="7" height="18" fill="#0000ff"/>
<rect x="883" y="452" width="7" height="18" fill="#f4a460"/>
<rect x="891" y="452" width="7" height="18" fill="#f4a460"/>
<rect x="899" y="452" width="7" height="18" fill="#f4a460"/>
<rect x="907" y="452" width="7" height="18" fill="#f4a460"/>
<rect x="915" y="452" width="7" height="18" fill="#f4a460"/>
<rect x="923" y="452" width="7" height="18" fill="#f4a460"/>
<rect x="931" y="452" width="7" height="18" fill="#f4a460"/>
<rect x="939" y="452" width="7" height="18" fill="#f4a460"/>
<rect x="947" y="452" width="7" height="18" fill="#f4a460"/>
<rect x="955" y="452" width="7" height="18" fill="#f4a460"/>
<rect x="963" y="452" width="7" height="18" fill="#f4a460"/>
<rect x="971" y="452" width="7" height="18" fill="#f4a460"/>
<rect x="979" y="452" width="7" height="18" fill="#f4a460"/>
<rect x="987" y="452" width="7" height="18" fill="#f4a460"/>
<rect x="1236" y="452" width="2" height="1" fill="#fff"/><rect x="1236" y="470" width="2" height="1" fill="#fff"/><rect x="1236" y="474" width="2" height="1" fill="#fff"/><rect x="1236" y="597" width="2" height="1" fill="#fff"/>
<rect x="246" y="599" width="1" height="3" fill="#fff"/>
<rect x="310" y="599" width="1" height="3" fill="#fff"/>
<rect x="374" y="599" width="1" height="3" fill="#fff"/>
<rect x="438" y="599" width="1" height="3" fill="#fff"/>
<rect x="502" y="599" width="1" height="3" fill="#fff"/>
<rect x="566" y="599" width="1" height="3" fill="#fff"/>
<rect x="630" y="599" width="1" height="3" fill="#fff"/>
<rect x="694" y="599" width="1" height="3" fill="#fff"/>
<rect x="758" y="599" width="1" height="3" fill="#fff"/>
<rect x="822" y="599" width="1" height="3" fill="#fff"/>
<rect x="886" y="599" width="1" height="3" fill="#fff"/>
<rect x="950" y="599" width="1" height="3" fill="#fff"/>
<g shape-rendering="auto">
<polyline points="246,515.4 282,515.4 284,516.5 306,516.5 308,517.5 432,517.5 440,521 447,525 455,534 462,534.5 470,530 476,527 484,523 494,522.5 500,519 510,518 518,515 526,514 534,511.5 576,511.5 584,507 592,503 600,498.5 608,497.5 616,497 622,494.5 712,494.5 716,493.5 724,493 740,491.5 756,490.5 782,488.5 790,487.5 820,485.5 896,485.5 906,487 930,488 964,489 990,489" fill="none" stroke="#00bfff" stroke-width="1" stroke-dasharray="3 3"/>
<polyline points="246,539 262,539.5 280,543 296,544 304,547 320,548.5 330,549.5 432,549.5 440,551 447,555 455,559 463,559.5 470,557 478,554 484,553 494,552.5 510,550 518,547.5 528,547 534,546 576,546 584,543 592,541 600,538.5 616,538 622,536.5 704,536.5 712,533 724,527 732,524.5 746,523 760,516 768,513.5 776,513 790,508 800,507 814,503 828,499.5 894,499 902,503 910,506 920,507.5 926,510 940,511 950,514 964,514.5 990,514.5" fill="none" stroke="#696969" stroke-width="1" stroke-dasharray="3 3"/>
<polyline points="246,564.5 264,564.5 270,568 280,569 288,572 296,572.5 304,576 312,578 320,580 326,581.5 432,581.5 440,582.5 450,583.5 460,584 470,583 484,582.5 494,582 526,582 532,580.5 576,580.5 590,580 600,578.5 702,578.5 708,576 716,570 724,564 726,562 732,557 744,556 750,548 760,546 766,538.5 778,538 788,529 800,528.5 808,520.5 816,520 826,514 832,513.5 888,513.5 896,518 904,524 910,528 920,528.5 926,534 944,535.5 950,540 964,540.5 990,540.5" fill="none" stroke="#f4a460" stroke-width="1" stroke-dasharray="3 3"/>
<polyline points="249,572 262,572 270,577 285,577 292,581 300,582 310,587 320,588 326,592 352,592" fill="none" stroke="#f4a460" stroke-width="5.4" stroke-linejoin="round" stroke-linecap="round"/>
<polyline points="352,592 358,588 380,567 392,566 400,556 408,556 415,547 425,547 438,536 446,535 455,526 464,526 472,518 484,513 496,511 502,506 514,505 520,502 530,501 536,499.5 576,499.5 584,495 592,491 600,487.5 608,484 616,481 624,479.5 662,479.5" fill="none" stroke="#0000ff" stroke-width="5.4" stroke-linejoin="round" stroke-linecap="round"/>
<polyline points="662,480 670,483.5 678,484 686,492 694,503 702,504 710,516 724,516.5 760,516.5" fill="none" stroke="#f4a460" stroke-width="5.4" stroke-linejoin="round" stroke-linecap="round"/>
<polyline points="760,516.5 766,510 782,509.5 790,503.5 840,503 848,498.5 856,498 862,495 878,494.5" fill="none" stroke="#0000ff" stroke-width="5.4" stroke-linejoin="round" stroke-linecap="round"/>
<polyline points="878,495 886,502 894,516 902,525 910,533 918,534 926,542.5 942,543 950,549 991,549" fill="none" stroke="#f4a460" stroke-width="5.4" stroke-linejoin="round" stroke-linecap="round"/>
</g>
</svg>
<div style="position:absolute;white-space:nowrap;font-size:10px;line-height:10px;letter-spacing:-0.467px;color:#fff;left:250px;top:106px">EURJPY,H4</div>
<div style="position:absolute;white-space:nowrap;font-size:10px;line-height:10px;letter-spacing:-0.609px;color:#fff;left:1241.5px;top:112px">130.385</div>
<div style="position:absolute;white-space:nowrap;font-size:10px;line-height:10px;letter-spacing:-0.609px;color:#fff;left:1241.5px;top:145px">129.800</div>
<div style="position:absolute;white-space:nowrap;font-size:10px;line-height:10px;letter-spacing:-0.609px;color:#fff;left:1241.5px;top:178px">129.215</div>
<div style="position:absolute;white-space:nowrap;font-size:10px;line-height:10px;letter-spacing:-0.609px;color:#fff;left:1241.5px;top:211px">128.615</div>
<div style="position:absolute;white-space:nowrap;font-size:10px;line-height:10px;letter-spacing:-0.609px;color:#fff;left:1241.5px;top:244px">128.030</div>
<div style="position:absolute;white-space:nowrap;font-size:10px;line-height:10px;letter-spacing:-0.609px;color:#fff;left:1241.5px;top:277px">127.445</div>
<div style="position:absolute;white-space:nowrap;font-size:10px;line-height:10px;letter-spacing:-0.609px;color:#fff;left:1241.5px;top:310px">126.860</div>
<div style="position:absolute;white-space:nowrap;font-size:10px;line-height:10px;letter-spacing:-0.609px;color:#fff;left:1241.5px;top:343px">126.275</div>
<div style="position:absolute;white-space:nowrap;font-size:10px;line-height:10px;letter-spacing:-0.609px;color:#fff;left:1241.5px;top:376px">125.675</div>
<div style="position:absolute;white-space:nowrap;font-size:10px;line-height:10px;letter-spacing:-0.609px;color:#fff;left:1241.5px;top:409px">125.090</div>
<div style="position:absolute;white-space:nowrap;font-size:10px;line-height:10px;letter-spacing:-0.609px;color:#fff;left:1241.5px;top:442px">124.505</div>
<div class="a" style="left:1237px;top:237px;width:41px;height:10px;background:#fff"></div>
<div style="position:absolute;white-space:nowrap;font-size:10px;line-height:10px;letter-spacing:-0.609px;color:#000;left:1241.5px;top:238px">128.154</div>
<div style="position:absolute;white-space:nowrap;font-size:10px;line-height:10px;letter-spacing:-0.500px;color:#fff;left:1240px;top:454px">1</div>
<div style="position:absolute;white-space:nowrap;font-size:10px;line-height:10px;letter-spacing:-0.500px;color:#fff;left:1240px;top:461px">0</div>
<div style="position:absolute;white-space:nowrap;font-size:10px;line-height:10px;letter-spacing:-0.526px;color:#fff;left:1239.5px;top:477px">61.2167</div>
<div style="position:absolute;white-space:nowrap;font-size:10px;line-height:10px;letter-spacing:-0.656px;color:#fff;left:1239.5px;top:529px">0.00</div>
<div style="position:absolute;white-space:nowrap;font-size:10px;line-height:10px;letter-spacing:-0.498px;color:#fff;left:1239px;top:588px">-68.2478</div>
<div style="position:absolute;white-space:nowrap;font-size:10px;line-height:10px;letter-spacing:-0.328px;color:#ffeedd;left:250px;top:456px">H4 ptl histo 1.0000</div>
<div style="position:absolute;white-space:nowrap;font-size:10px;line-height:10px;letter-spacing:-0.319px;color:#fff;left:250px;top:479px">H4 WaveTrend oscillator (7,30, filter 1.8,0) 46.3251 43.1727 19.3047 -4.5633 -7.7157 -16.7225 -16.7225 -13.7526</div>
<div style="position:absolute;white-space:nowrap;font-size:10px;line-height:10px;letter-spacing:-0.313px;color:#fff;left:245px;top:603px">28 May 2018</div>
<div style="position:absolute;white-space:nowrap;font-size:10px;line-height:10px;letter-spacing:-0.210px;color:#fff;left:309px;top:603px">29 May 12:00</div>
<div style="position:absolute;white-space:nowrap;font-size:10px;line-height:10px;letter-spacing:-0.237px;color:#fff;left:373px;top:603px">30 May 20:00</div>
<div style="position:absolute;white-space:nowrap;font-size:10px;line-height:10px;letter-spacing:-0.458px;color:#fff;left:437px;top:603px">1 Jun 04:00</div>
<div style="position:absolute;white-space:nowrap;font-size:10px;line-height:10px;letter-spacing:-0.368px;color:#fff;left:501px;top:603px">4 Jun 12:00</div>
<div style="position:absolute;white-space:nowrap;font-size:10px;line-height:10px;letter-spacing:-0.368px;color:#fff;left:565px;top:603px">5 Jun 20:00</div>
<div style="position:absolute;white-space:nowrap;font-size:10px;line-height:10px;letter-spacing:-0.448px;color:#fff;left:629px;top:603px">7 Jun 04:00</div>
<div style="position:absolute;white-space:nowrap;font-size:10px;line-height:10px;letter-spacing:-0.368px;color:#fff;left:693px;top:603px">8 Jun 12:00</div>
<div style="position:absolute;white-space:nowrap;font-size:10px;line-height:10px;letter-spacing:-0.374px;color:#fff;left:757px;top:603px">11 Jun 20:00</div>
<div style="position:absolute;white-space:nowrap;font-size:10px;line-height:10px;letter-spacing:-0.413px;color:#fff;left:821px;top:603px">13 Jun 04:00</div>
<div style="position:absolute;white-space:nowrap;font-size:10px;line-height:10px;letter-spacing:-0.440px;color:#fff;left:885px;top:603px">14 Jun 12:00</div>
<div style="position:absolute;white-space:nowrap;font-size:10px;line-height:10px;letter-spacing:-0.413px;color:#fff;left:949px;top:603px">15 Jun 20:00</div>
<div class="a" style="left:242px;top:622px;width:1037px;height:19px;background:#f0f0f0;"></div>
<div class="a" style="left:599px;top:620px;width:80px;height:20px;background:#fff;border:1px solid #000;border-top:none"></div>
<div class="t g" style="left:258.30px;top:624px;letter-spacing:-0.741px;">USDJPY,M30</div>
<div class="t g" style="left:346.50px;top:624px;letter-spacing:-0.896px;">USDJPY,H1</div>
<div class="t g" style="left:427.00px;top:624px;letter-spacing:-0.595px;">AUDUSD,M30</div>
<div class="t g" style="left:523.30px;top:624px;letter-spacing:-0.845px;">AUDUSD,H1</div>
<div class="t " style="left:610.00px;top:624px;letter-spacing:-0.934px;">EURJPY,H4</div>
<div class="t g" style="left:690.40px;top:624px;letter-spacing:-1.096px;">EURJPY,H1</div>
<div class="t g" style="left:771.40px;top:624px;letter-spacing:-0.519px;">CADJPY,M30</div>
<div class="t g" style="left:863.50px;top:624px;letter-spacing:-0.709px;">CADJPY,H1</div>
<div class="t g" style="left:946.70px;top:624px;letter-spacing:-0.929px;">EURUSD,M30</div>
<div class="t g" style="left:1039.20px;top:624px;letter-spacing:-1.320px;">EURUSD,H1</div>
<div class="a" style="left:335px;top:625px;width:1px;height:12px;background:#707070;"></div>
<div class="a" style="left:415px;top:625px;width:1px;height:12px;background:#707070;"></div>
<div class="a" style="left:511px;top:625px;width:1px;height:12px;background:#707070;"></div>
<div class="a" style="left:760px;top:625px;width:1px;height:12px;background:#707070;"></div>
<div class="a" style="left:851px;top:625px;width:1px;height:12px;background:#707070;"></div>
<div class="a" style="left:935px;top:625px;width:1px;height:12px;background:#707070;"></div>
<div class="a" style="left:1027px;top:625px;width:1px;height:12px;background:#707070;"></div>
<div class="a" style="left:1111px;top:625px;width:1px;height:12px;background:#707070;"></div>
<svg style="left:1247px;top:627px" width="24" height="8" viewBox="0 0 24 8"><path d="M5 0v8L0.500 4z M18.500 0v8l4.500-4z" fill="#8a8a8a"/></svg>
<!-- terminal -->
<div class="a" style="left:0px;top:642px;width:1279px;height:3px;background:#f7f7f7;"></div>
<svg style="left:4px;top:648px" width="6" height="6" viewBox="0 0 6 6" ><path d="M0.600 0.600L5.4 5.4M5.4 0.600L0.600 5.4" stroke="#000" stroke-width="1.450"/></svg>
<div class="a" style="left:1px;top:659px;width:13px;height:75px;background:linear-gradient(0deg,#c3d1e5,#dde6f2)"></div>
<div class="t" style="left:-13px;top:703px;width:42px;height:14px;transform:rotate(-90deg);transform-origin:center;text-align:center;letter-spacing:-0.050px;font-size:11px">Terminal</div>
<div class="a" style="left:15px;top:645px;width:1261px;height:67px;background:#fff;border:1px solid #a0a0a0;border-bottom:none"></div>
<div class="a" style="left:16px;top:670px;width:1259px;height:1px;background:#d0d0d0;"></div>
<div class="a" style="left:16px;top:690px;width:1259px;height:1px;background:#d0d0d0;"></div>
<div class="a" style="left:16px;top:691px;width:1259px;height:20px;background:#c8c8c8;"></div>
<div class="a" style="left:16px;top:711px;width:1259px;height:1px;background:#000;"></div>
<div class="a" style="left:140px;top:646px;width:1px;height:45px;background:#d0d0d0;"></div>
<div class="t " style="left:22.50px;top:651px;letter-spacing:-0.355px;">Order</div>
<div class="t " style="left:38.00px;top:673px;letter-spacing:-0.747px;">1044256207</div>
<div class="a" style="left:313px;top:646px;width:1px;height:45px;background:#d0d0d0;"></div>
<div class="t " style="left:281.75px;top:651px;letter-spacing:-0.161px;">Time</div>
<div class="t " style="left:211.25px;top:673px;letter-spacing:-0.655px;">2018.06.18 16:21:55</div>
<div class="a" style="left:399px;top:646px;width:1px;height:45px;background:#d0d0d0;"></div>
<div class="t " style="left:369.75px;top:651px;letter-spacing:-0.755px;">Type</div>
<div class="t " style="left:380.00px;top:673px;letter-spacing:-0.839px;">sell</div>
<div class="a" style="left:465px;top:646px;width:1px;height:45px;background:#d0d0d0;"></div>
<div class="t " style="left:440.75px;top:651px;letter-spacing:-1.365px;">Size</div>
<div class="t " style="left:442.00px;top:673px;letter-spacing:-1.115px;">0.03</div>
<div class="a" style="left:552px;top:646px;width:1px;height:45px;background:#d0d0d0;"></div>
<div class="t " style="left:507.75px;top:651px;letter-spacing:-0.253px;">Symbol</div>
<div class="t " style="left:510.25px;top:673px;letter-spacing:-0.222px;">audusd</div>
<div class="a" style="left:648px;top:646px;width:1px;height:45px;background:#d0d0d0;"></div>
<div class="t " style="left:617.00px;top:651px;letter-spacing:-0.461px;">Price</div>
<div class="t " style="left:605.75px;top:673px;letter-spacing:-0.768px;">0.74340</div>
<div class="a" style="left:744px;top:646px;width:1px;height:45px;background:#d0d0d0;"></div>
<div class="t " style="left:716.75px;top:651px;letter-spacing:-0.727px;">S / L</div>
<div class="t " style="left:702.50px;top:673px;letter-spacing:-0.893px;">0.00000</div>
<div class="a" style="left:840px;top:646px;width:1px;height:45px;background:#d0d0d0;"></div>
<div class="t " style="left:811.25px;top:651px;letter-spacing:-0.461px;">T / P</div>
<div class="t " style="left:798.00px;top:673px;letter-spacing:-0.810px;">0.00000</div>
<div class="a" style="left:936px;top:646px;width:1px;height:45px;background:#d0d0d0;"></div>
<div class="t " style="left:905.00px;top:651px;letter-spacing:-0.461px;">Price</div>
<div class="t " style="left:893.75px;top:673px;letter-spacing:-0.768px;">0.74383</div>
<div class="a" style="left:1032px;top:646px;width:1px;height:45px;background:#d0d0d0;"></div>
<div class="t " style="left:961.00px;top:651px;letter-spacing:-0.059px;">Commission</div>
<div class="t " style="left:1007.75px;top:673px;letter-spacing:-0.865px;">0.00</div>
<div class="a" style="left:1128px;top:646px;width:1px;height:45px;background:#d0d0d0;"></div>
<div class="t " style="left:1095.00px;top:651px;letter-spacing:-0.839px;">Swap</div>
<div class="t " style="left:1103.75px;top:673px;letter-spacing:-0.865px;">0.00</div>
<div class="t " style="left:1241.00px;top:651px;letter-spacing:0.150px;">Profit</div>
<div class="t " style="left:1214.50px;top:673px;letter-spacing:-0.615px;">-465.70</div>
<svg style="left:63.500px;top:655px" width="5" height="6" viewBox="0 0 5 6"><path d="M0.500 5.500L3.500 0.500" stroke="#555" stroke-width="0.800"/></svg>
<svg style="left:19px;top:673.5px" width="14" height="16" viewBox="0 0 14 16" ><path d="M1.5 0.5h7l3 3v10.5h-10z" fill="#fff" stroke="#555" stroke-width="1"/><path d="M8.5 0.5v3h3" fill="none" stroke="#555"/>
<circle cx="9.5" cy="11.5" r="3.2" fill="#e83c1c"/></svg>
<svg style="left:19px;top:693px" width="12" height="14" viewBox="0 0 12 14" ><rect x="0.5" y="0.5" width="11" height="13" rx="1" fill="#fff" stroke="#777"/>
<path d="M6 11L10 7H7.5V3.5H4.5V7H2z" fill="#e8401c" stroke="#a82a10" stroke-width="0.7"/></svg>
<div class="t " style="left:38.75px;top:693px;letter-spacing:-0.283px;font-weight:bold;">Balance: 74 523.26 NGC</div>
<div class="t " style="left:176.25px;top:693px;letter-spacing:-0.225px;font-weight:bold;">Equity: 74 057.56</div>
<div class="t " style="left:277.50px;top:693px;letter-spacing:-0.140px;font-weight:bold;">Margin: 1 610.47</div>
<div class="t " style="left:376.25px;top:693px;letter-spacing:-0.124px;font-weight:bold;">Free margin: 72 447.09</div>
<div class="t " style="left:510.50px;top:693px;letter-spacing:-0.092px;font-weight:bold;">Margin level: 4598.49%</div>
<div class="t " style="left:1209.50px;top:693px;letter-spacing:0.219px;font-weight:bold;">-465.70</div>
<svg style="left:1262px;top:677px" width="7" height="7" viewBox="0 0 7 7" ><path d="M0.600 0.600L6.4 6.4M6.4 0.600L0.600 6.4" stroke="#777" stroke-width="1.450"/></svg>
<div class="a" style="left:17px;top:711px;width:51px;height:20px;background:#fff;border:1px solid #000;border-top:none"></div>
<div class="t " style="left:28.75px;top:714px;letter-spacing:-0.664px;">Trade</div>
<div class="t g" style="left:78.25px;top:714px;letter-spacing:-0.634px;">Exposure</div>
<div class="t g" style="left:145.00px;top:714px;letter-spacing:0.070px;">Account History</div>
<div class="t g" style="left:251.25px;top:714px;letter-spacing:-0.589px;">News</div>
<div class="t g" style="left:312.50px;top:714px;letter-spacing:-0.384px;">Alerts</div>
<div class="t g" style="left:362.50px;top:714px;letter-spacing:-0.018px;">Mailbox</div>
<div class="t g" style="left:431.25px;top:714px;letter-spacing:-0.084px;">Market</div>
<div class="t g" style="left:500.00px;top:714px;letter-spacing:-0.518px;">Signals</div>
<div class="t g" style="left:557.50px;top:714px;letter-spacing:-0.701px;">Code Base</div>
<div class="t g" style="left:632.50px;top:714px;letter-spacing:-0.737px;">Experts</div>
<div class="t g" style="left:688.75px;top:714px;letter-spacing:-0.310px;">Journal</div>
<div class="a" style="left:135px;top:714px;width:1px;height:13px;background:#707070;"></div>
<div class="a" style="left:241px;top:714px;width:1px;height:13px;background:#707070;"></div>
<div class="a" style="left:302px;top:714px;width:1px;height:13px;background:#707070;"></div>
<div class="a" style="left:352px;top:714px;width:1px;height:13px;background:#707070;"></div>
<div class="a" style="left:421px;top:714px;width:1px;height:13px;background:#707070;"></div>
<div class="a" style="left:490px;top:714px;width:1px;height:13px;background:#707070;"></div>
<div class="a" style="left:547px;top:714px;width:1px;height:13px;background:#707070;"></div>
<div class="a" style="left:622px;top:714px;width:1px;height:13px;background:#707070;"></div>
<div class="a" style="left:679px;top:714px;width:1px;height:13px;background:#707070;"></div>
<div class="a" style="left:737px;top:714px;width:1px;height:13px;background:#707070;"></div>
<div class="t " style="left:282.00px;top:718px;letter-spacing:-0.250px;font-size:9px;font-weight:bold;color:#e81123">99</div>
<div class="t " style="left:405.75px;top:718px;letter-spacing:-0.300px;font-size:9px;font-weight:bold;color:#e81123">9</div>
<div class="t " style="left:470.00px;top:718px;letter-spacing:-0.500px;font-size:9px;font-weight:bold;color:#e81123">26</div>
<div class="a" style="left:0px;top:735px;width:1279px;height:1px;background:#a0a0a0;"></div>
<div class="a" style="left:0px;top:736px;width:1279px;height:1px;background:#fff;"></div>
<!-- status -->
<div class="t " style="left:2.00px;top:743px;letter-spacing:-0.432px;">For Help, press F1</div>
<div class="t " style="left:592.50px;top:743px;letter-spacing:-0.169px;">Default</div>
<div class="a" style="left:586px;top:739px;width:1px;height:19px;background:#c0c0c0;"></div>
<div class="a" style="left:702px;top:739px;width:1px;height:19px;background:#c0c0c0;"></div>
<div class="a" style="left:804px;top:739px;width:1px;height:19px;background:#c0c0c0;"></div>
<div class="a" style="left:875px;top:739px;width:1px;height:19px;background:#c0c0c0;"></div>
<div class="a" style="left:946px;top:739px;width:1px;height:19px;background:#c0c0c0;"></div>
<div class="a" style="left:1014px;top:739px;width:1px;height:19px;background:#c0c0c0;"></div>
<div class="a" style="left:1083px;top:739px;width:1px;height:19px;background:#c0c0c0;"></div>
<div class="a" style="left:1150px;top:739px;width:1px;height:19px;background:#c0c0c0;"></div>
<div class="t " style="left:708.00px;top:743px;letter-spacing:-0.642px;">2018.06.04 16:00</div>
<div class="t " style="left:810.00px;top:743px;letter-spacing:-0.622px;">O: 128.288</div>
<div class="t " style="left:881.20px;top:743px;letter-spacing:-0.588px;">H: 128.463</div>
<div class="t " style="left:952.50px;top:743px;letter-spacing:-0.799px;">L: 127.991</div>
<div class="t " style="left:1020.30px;top:743px;letter-spacing:-0.665px;">C: 128.164</div>
<div class="t " style="left:1090.00px;top:743px;letter-spacing:-0.668px;">V: 22332</div>
<div class="t " style="left:1183.40px;top:743px;letter-spacing:-0.317px;">393/3 kb</div>
<svg style="left:1156px;top:743px" width="23" height="13" viewBox="0 0 23 13" shape-rendering="crispEdges"><rect x="0" y="0" width="2" height="9" fill="#4c6c00"/><rect x="0" y="10" width="2" height="3" fill="#003050"/><rect x="3" y="0" width="2" height="8" fill="#4c6c00"/><rect x="3" y="9" width="2" height="4" fill="#003050"/><rect x="6" y="0" width="2" height="7" fill="#4c6c00"/><rect x="6" y="8" width="2" height="5" fill="#003050"/><rect x="9" y="0" width="2" height="6" fill="#4c6c00"/><rect x="9" y="7" width="2" height="6" fill="#003050"/><rect x="12" y="0" width="2" height="5" fill="#4c6c00"/><rect x="12" y="6" width="2" height="7" fill="#003050"/><rect x="15" y="0" width="2" height="4" fill="#4c6c00"/><rect x="15" y="5" width="2" height="8" fill="#003050"/><rect x="18" y="0" width="2" height="3" fill="#4c6c00"/><rect x="18" y="4" width="2" height="9" fill="#003050"/><rect x="21" y="0" width="2" height="2" fill="#4c6c00"/><rect x="21" y="3" width="2" height="10" fill="#003050"/></svg>
<!-- taskbar -->
<div class="a" style="left:0px;top:760px;width:1279px;height:40px;background:#000;"></div>
<div class="a" style="left:392px;top:760px;width:48px;height:40px;background:#333337;"></div>
<div class="a" style="left:347px;top:798px;width:40px;height:2px;background:#76b9ed;"></div>
<div class="a" style="left:392px;top:798px;width:48px;height:2px;background:#76b9ed;"></div>
<div class="a" style="left:445px;top:798px;width:40px;height:2px;background:#76b9ed;"></div>
<svg style="left:16px;top:772px" width="16" height="16" viewBox="0 0 16 16" ><path d="M0 2.300L6.500 1.400V7.600H0z M7.400 1.300L16 0V7.600H7.400z M0 8.400H6.500V14.600L0 13.700z M7.400 8.400H16V16L7.400 14.700z" fill="#fff"/></svg>
<svg style="left:63px;top:770px" width="18" height="18" viewBox="0 0 18 18" ><circle cx="11.500" cy="7" r="5" fill="none" stroke="#fff" stroke-width="1.300"/><path d="M8 10.500L1.500 17" stroke="#fff" stroke-width="1.300"/></svg>
<svg style="left:109px;top:773px" width="21" height="14" viewBox="0 0 21 14" ><rect x="4.500" y="0.500" width="12" height="13" fill="none" stroke="#fff" stroke-width="1.200"/><path d="M2.500 2.500H0.500V11.500H2.500M18.500 2.500H20.500V11.500H18.500" fill="none" stroke="#fff" stroke-width="1.200"/></svg>
<svg style="left:159px;top:767px" width="23" height="24" viewBox="0 0 23 24" ><path d="M7.500 7V5a4 4 0 0 1 8 0v2" fill="none" stroke="#fff" stroke-width="1.200"/><path d="M0.500 6.500h22v15q0 2-2 2h-18q-2 0-2-2z" fill="#fff"/><rect x="6.500" y="9.500" width="4.600" height="4.600" fill="#f25022"/><rect x="12" y="9.500" width="4.600" height="4.600" fill="#7fba00"/><rect x="6.500" y="15" width="4.600" height="4.600" fill="#00a4ef"/><rect x="12" y="15" width="4.600" height="4.600" fill="#ffb900"/></svg>
<svg style="left:210px;top:769px" width="21" height="22" viewBox="0 0 21 22" ><path d="M0.500 10.500C1 4 5.500 0.500 10.800 0.500c6.200 0 9.700 4.500 9.700 10v2.300H7.200c0.200 3.200 2.800 4.700 5.800 4.700 2.600 0 4.600-0.800 6.200-1.800v4.400c-2 1.100-4.400 1.700-7.200 1.700-6 0-9.800-3.600-9.800-9.200 0-3.400 1.800-6.200 4.600-7.600C4.600 6.200 3.300 8 3 10.300zM7.300 9h7.700c0-2.600-1.500-4.300-3.800-4.300C9 4.700 7.600 6.500 7.300 9z" fill="#0078d7"/></svg>
<svg style="left:257px;top:769.7px" width="24" height="19.3" viewBox="0 0 24 19.3" ><path d="M0 5.800L11.750 0L24 5.800V19.300H0z" fill="#fff"/><path d="M1.100 6.500H22.400L14 11.100L19.200 16L12 11.800z" fill="#000"/></svg>
<svg style="left:307px;top:770.8px" width="21.5" height="18.4" viewBox="0 0 21.5 18.4" ><path d="M0.200 1q0-1 1-1h7.500q1 0 1 1v1h10.500q1 0 1 1v13.200q0 1-1 1h-19q-1 0-1-1z" fill="#fde48c"/><path d="M0.200 1q0-1 1-1h7.500q1 0 1 1v0.800q0 1-1 1h-8.500z" fill="#f5c93c"/><rect x="1.800" y="0.900" width="5.200" height="1.200" fill="#fff8d8"/><rect x="1.800" y="0.900" width="1.300" height="1.200" fill="#4ab8e8"/><path d="M4.200 18.400v-7.300q0-1 1-1h11.500q1 0 1 1v7.300h-3.600v-4.400h-6v4.400z" fill="#38b0ea"/></svg>
<svg style="left:358px;top:771px" width="19" height="18" viewBox="0 0 19 18" ><path d="M0 0h19v11l-7 7H0z" fill="#f3e38d"/><path d="M19 11l-7 7v-7z" fill="#8a8240"/></svg>
<svg style="left:404.5px;top:768.5px" width="23" height="23" viewBox="0 0 24 24" ><defs><radialGradient id="mh" cx="0.3" cy="0.35" r="0.8"><stop offset="0" stop-color="#ffb89a"/><stop offset="0.35" stop-color="#ee6a3c"/><stop offset="0.8" stop-color="#dc4a1c"/><stop offset="1" stop-color="#b0360e"/></radialGradient>
<linearGradient id="mhg" x1="0" y1="0" x2="0" y2="1"><stop offset="0" stop-color="#e4e070"/><stop offset="1" stop-color="#a8c832"/></linearGradient>
<clipPath id="mhc"><circle cx="12" cy="12" r="11.6"/></clipPath></defs>
<circle cx="12" cy="12" r="11.6" fill="url(#mh)"/>
<g clip-path="url(#mhc)"><path d="M6.500 0L14.500 10.500L22.500 3.500L20 -2H8z" fill="url(#mhg)"/>
<path d="M6.200 0L14.500 10.800L23 19.500M22.500 3L14.500 10.800Q8.200 16.500 8 24" fill="none" stroke="#f4f0ec" stroke-width="1.700"/></g></svg>
<svg style="left:454px;top:768px" width="23" height="23" viewBox="0 0 23 23" ><defs><linearGradient id="ff" x1="0.85" y1="0.1" x2="0.2" y2="0.95"><stop offset="0" stop-color="#fff44f"/><stop offset="0.35" stop-color="#ffa820"/><stop offset="0.7" stop-color="#ff4a2a"/><stop offset="1" stop-color="#e0188a"/></linearGradient><linearGradient id="fb" x1="0.5" y1="0" x2="0.5" y2="1"><stop offset="0" stop-color="#20a8f8"/><stop offset="0.6" stop-color="#1060e0"/><stop offset="1" stop-color="#28189a"/></linearGradient></defs><path d="M13.500 0.500Q17 2 18.500 4.500Q22.500 8 22.500 13A11 11 0 0 1 0.500 13Q0.500 7 3 3.500Q3.500 5 4.500 5.500Q8 2.500 13.500 2.800z" fill="url(#ff)"/><circle cx="11.500" cy="10.500" r="6.300" fill="url(#fb)"/><path d="M4 6.500Q6 5.500 8.500 6.500L10.500 5.500Q9.500 8 11 9Q8.500 9.500 8 11.500Q9.500 13.500 13 12.500Q11 15.500 8 15Q4.500 13.500 4 6.500z" fill="#ff8a20"/><path d="M13.500 0.500Q18 3.500 16.800 8.500Q18.500 10 17.500 13.500Q21 10 20 6Q18.500 2.500 13.500 0.500z" fill="#ffe83c"/></svg>
<svg style="left:967px;top:772px" width="17" height="16" viewBox="0 0 17 16" ><circle cx="11.500" cy="3.800" r="3" fill="none" stroke="#fff" stroke-width="1.200"/><path d="M6.500 13q0-5.500 5-5.500t5 5" fill="none" stroke="#fff" stroke-width="1.200"/><circle cx="5" cy="8" r="2.500" fill="#000" stroke="#fff" stroke-width="1.200"/><path d="M0.800 15.500q0-4.500 4.200-4.500t4.200 4.500" fill="#000" stroke="#fff" stroke-width="1.200"/></svg>
<svg style="left:1008px;top:776px" width="14" height="8" viewBox="0 0 14 8" ><path d="M0.800 7.200L7 1l6.200 6.200" fill="none" stroke="#fff" stroke-width="1.300"/></svg>
<svg style="left:1039px;top:776px" width="17" height="10" viewBox="0 0 17 10" ><rect x="0.600" y="0.600" width="13.500" height="8.300" fill="none" stroke="#fff" stroke-width="1.200"/><rect x="2.500" y="2.500" width="6.500" height="4.500" fill="#fff"/><rect x="14.500" y="3" width="1.500" height="3.500" fill="#fff"/></svg>
<svg style="left:1073px;top:774px" width="14" height="14" viewBox="0 0 14 14" ><g fill="none" stroke="#fff" stroke-width="1.200"><path d="M1 13A12 12 0 0 1 13 1" opacity="0.550"/><path d="M4.200 13A8.800 8.800 0 0 1 13 4.200" opacity="0.750"/><path d="M7.400 13A5.600 5.600 0 0 1 13 7.400"/></g><circle cx="11.500" cy="11.500" r="1.600" fill="#fff"/></svg>
<svg style="left:1102px;top:773px" width="19" height="15" viewBox="0 0 19 15" ><path d="M0.600 5h3l4-4v13l-4-4h-3z" fill="none" stroke="#fff" stroke-width="1.100"/><g fill="none" stroke="#fff" stroke-width="1"><path d="M10 5q1.500 2.500 0 5"/><path d="M12.500 3q3 4.500 0 9" opacity="0.600"/><path d="M15 1.200q4.500 6.300 0 12.600" opacity="0.400"/></g></svg>
<svg style="left:1238px;top:772px" width="18" height="17" viewBox="0 0 18 17" ><path d="M0.600 0.600h16v11.500h-5.500l-2.800 3-2.800-3H0.600z" fill="none" stroke="#fff" stroke-width="1.200"/></svg>
<div class="t " style="left:1133.00px;top:774px;letter-spacing:-1.500px;color:#fff;line-height:12px">ENG</div>
<div class="t " style="left:1173.00px;top:765px;letter-spacing:-0.379px;color:#fff;line-height:12px">2:29 PM</div>
<div class="t " style="left:1168.60px;top:782px;letter-spacing:-0.170px;color:#fff;line-height:12px">6/18/2018</div>
</body></html>
